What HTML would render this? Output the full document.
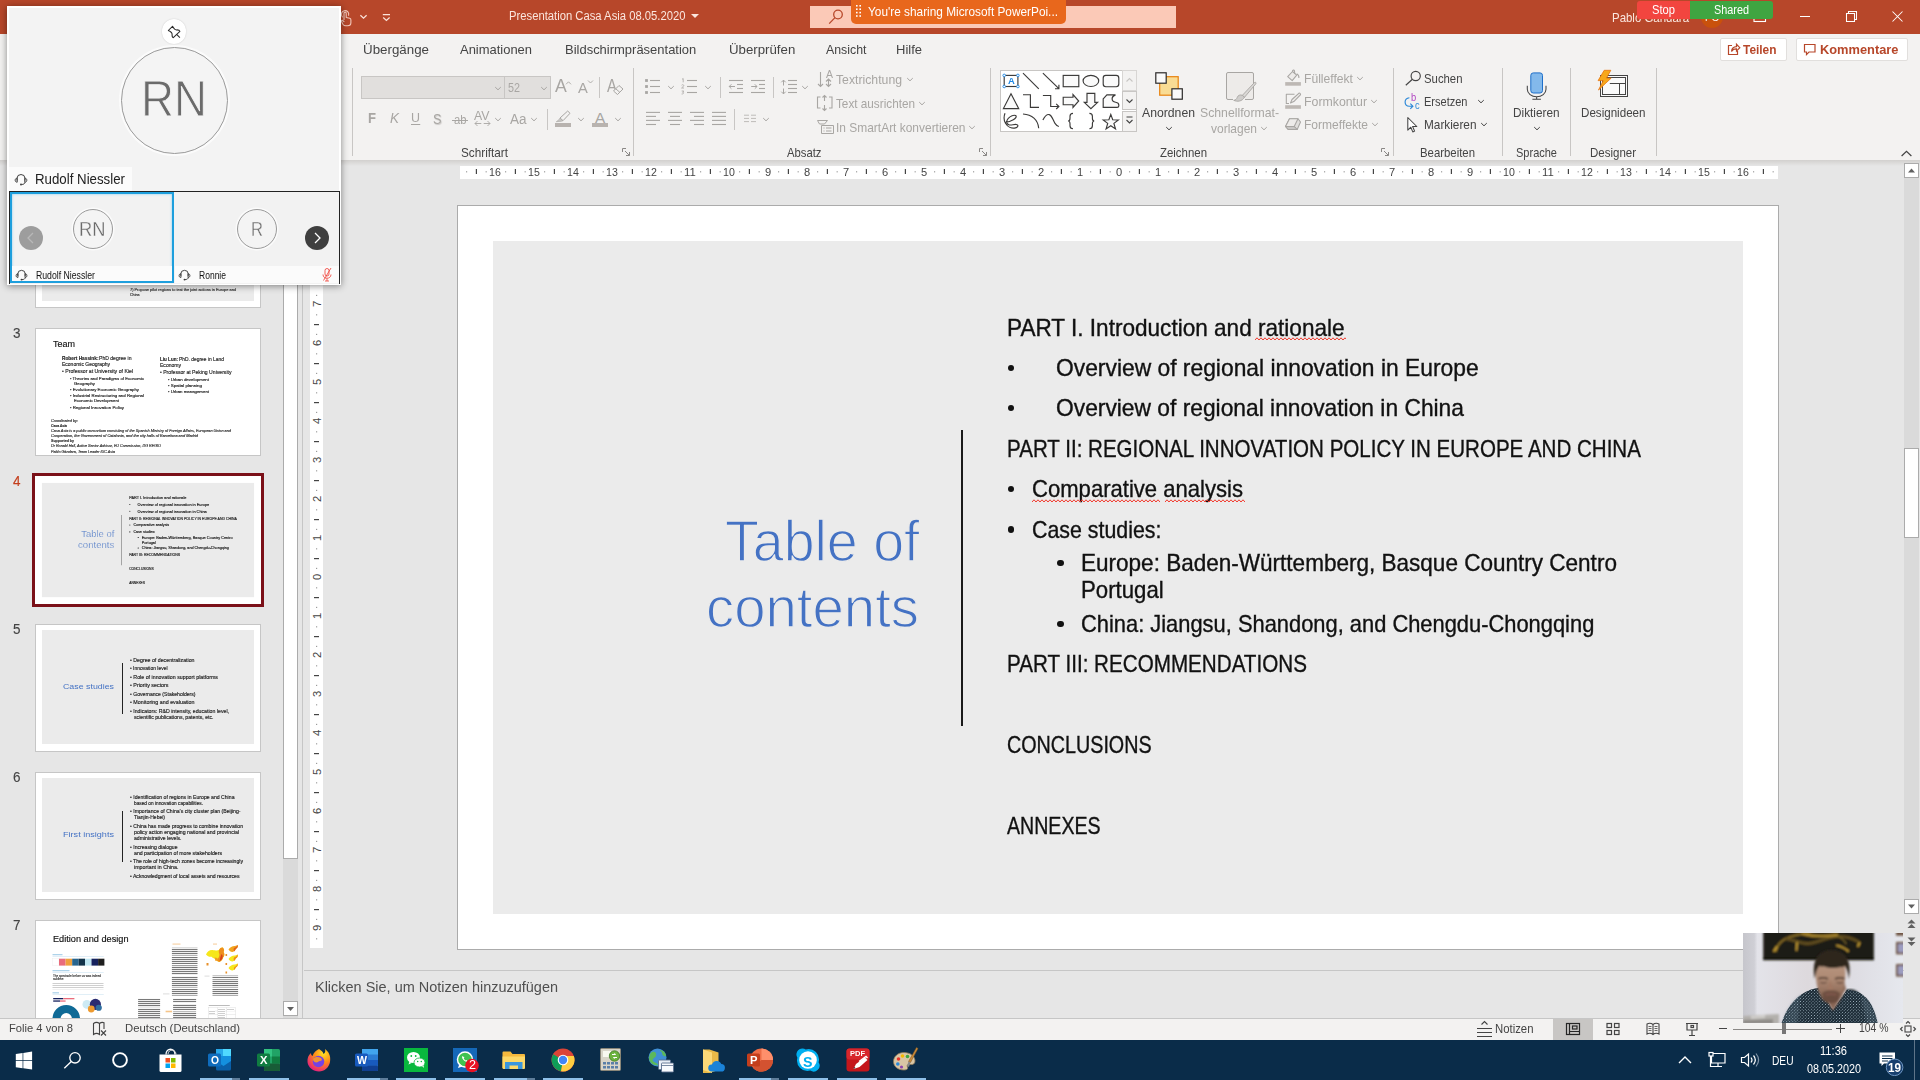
<!DOCTYPE html>
<html lang="de"><head><meta charset="utf-8"><title>Presentation Casa Asia 08.05.2020 - PowerPoint</title>
<style>
html,body{margin:0;padding:0;background:#E6E6E6;width:1920px;height:1080px;overflow:hidden;}
#r{position:relative;width:1920px;height:1080px;overflow:hidden;background:#E6E6E6;font-family:"Liberation Sans",sans-serif;}
#r div,#r span,#r svg{position:absolute;}
#r span.t{white-space:nowrap;line-height:1;transform-origin:0 0;}
#r .rel span, #r .rel div{position:static}
</style></head>
<body><div id="r">
<div style="left:0px;top:0px;width:1920px;height:34px;background:#B7472A;"></div>
<div style="left:0px;top:34px;width:1920px;height:126px;background:#F3F2F1;"></div>
<div style="left:0px;top:160px;width:1920px;height:6px;background:linear-gradient(#D2D0CE,#E6E6E6);"></div>
<svg style="left:336px;top:2px;" width="70" height="30" viewBox="0 0 70 30"><g fill="none" stroke="#F3C9BC" stroke-width="1.100" stroke-linecap="round" stroke-linejoin="round">
<path d="M6.300 14.800A3.700 3.700 0 1 1 12.600 13.300"/>
<path d="M8 17.500V11.200a1.100 1.100 0 0 1 2.200 0V15.500l3.500.800c.800.200 1.200.800 1.200 1.600V20.500c0 2-1.500 3.300-3.300 3.300h-1.800c-1.200 0-2.200-.600-2.900-1.600L5.500 19.500c-.500-.800.500-1.600 1.200-1L8 19.700"/>
</g><g fill="none" stroke="#FBE3DA" stroke-width="1.250">
<path d="M24.400 13.200l3.100 2.900 3.100-2.900"/>
<path d="M46.800 12.500h7.200M47.200 15.500l3.200 3 3.200-3"/>
</g></svg>
<span class="t" style="left:509.00px;top:9.59px;font-size:12.3px;color:#FBE6DE;transform:scaleX(0.9155);">Presentation Casa Asia 08.05.2020</span>
<svg style="left:690px;top:13px;" width="10" height="6" viewBox="0 0 10 6"><path d="M1 1h8L5 5z" fill="#FBE6DE"/></svg>
<div style="left:810px;top:6px;width:366px;height:22px;background:#FBC9B7;"></div>
<svg style="left:827px;top:8px;" width="18" height="18" viewBox="0 0 18 18"><g fill="none" stroke="#B7472A" stroke-width="1.3"><circle cx="11" cy="6.5" r="4.3"/><path d="M8 9.6L2.2 15.6"/></g></svg>
<div style="left:851px;top:0px;width:215px;height:24px;background:#E8671C;border-radius:0 0 5px 5px;"></div>
<svg style="left:855px;top:4px;" width="8" height="16" viewBox="0 0 8 16"><g fill="#fff"><rect x="1" y="1" width="1.6" height="1.6"/><rect x="4.4" y="1" width="1.6" height="1.6"/><rect x="1" y="4.4" width="1.6" height="1.6"/><rect x="4.4" y="4.4" width="1.6" height="1.6"/><rect x="1" y="7.8" width="1.6" height="1.6"/><rect x="4.4" y="7.8" width="1.6" height="1.6"/><rect x="1" y="11.2" width="1.6" height="1.6"/><rect x="4.4" y="11.2" width="1.6" height="1.6"/></g></svg>
<span class="t" style="left:868.00px;top:5.83px;font-size:12.6px;color:#fff;transform:scaleX(0.9399);">You're sharing Microsoft PowerPoi...</span>
<span class="t" style="left:1612.30px;top:11.00px;font-size:13px;color:#FBE6DE;transform:scaleX(0.8805);">Pablo Gandara</span>
<div style="left:1700.5px;top:6px;width:22px;height:22px;background:#C9510C;border-radius:50%;"></div>
<span class="t" style="left:1704.50px;top:12.19px;font-size:11px;color:#fff;transform:scaleX(0.8802);">PG</span>
<svg style="left:1753px;top:10px;" width="14" height="13" viewBox="0 0 14 13"><g fill="none" stroke="#fff" stroke-width="1.1"><rect x="1" y="1.5" width="11.5" height="10"/><path d="M1 4.5h11.5"/></g></svg>
<div style="left:1637px;top:1px;width:54px;height:18px;background:#F2453F;border-radius:3px 0 0 3px;"></div>
<div style="left:1690px;top:1px;width:83px;height:18px;background:#3FA541;border-radius:0 3px 3px 0;"></div>
<span class="t" style="left:1652.00px;top:4.09px;font-size:12.3px;color:#fff;transform:scaleX(0.9092);">Stop</span>
<span class="t" style="left:1714.00px;top:4.09px;font-size:12.3px;color:#fff;transform:scaleX(0.8826);">Shared</span>
<svg style="left:1795px;top:6px;" width="120" height="22" viewBox="0 0 120 22"><g fill="none" stroke="#fff" stroke-width="1.05">
<path d="M5 10.5h10"/>
<path d="M51.5 7.5h8v8h-8zM53.5 7.5v-2h8v8h-2"/>
<path d="M97.5 5.5l10 10M107.5 5.5l-10 10"/></g></svg>
<span class="t" style="left:363.00px;top:43.68px;font-size:12.9px;color:#444;transform:scaleX(1.0345);">Übergänge</span>
<span class="t" style="left:460.00px;top:43.68px;font-size:12.9px;color:#444;transform:scaleX(1.0046);">Animationen</span>
<span class="t" style="left:565.30px;top:43.68px;font-size:12.9px;color:#444;transform:scaleX(1.0069);">Bildschirmpräsentation</span>
<span class="t" style="left:729.40px;top:43.68px;font-size:12.9px;color:#444;transform:scaleX(1.0279);">Überprüfen</span>
<span class="t" style="left:826.30px;top:43.68px;font-size:12.9px;color:#444;transform:scaleX(0.9579);">Ansicht</span>
<span class="t" style="left:896.00px;top:43.68px;font-size:12.9px;color:#444;transform:scaleX(1.0079);">Hilfe</span>
<div style="left:1720px;top:37.5px;width:66.5px;height:23px;background:#fff;border:1px solid #E1DFDD;border-radius:2px;box-sizing:border-box;"></div>
<div style="left:1795.5px;top:37.5px;width:112px;height:23px;background:#fff;border:1px solid #E1DFDD;border-radius:2px;box-sizing:border-box;"></div>
<svg style="left:1726px;top:41px;" width="16" height="16" viewBox="0 0 16 16"><g fill="none" stroke="#B7472A" stroke-width="1.2"><path d="M6 4.5H2.5v9h9V10"/><path d="M5.5 10.5c.3-3 2-4.7 5-4.8V3.3l3.3 3.4-3.3 3.4V7.8c-2.2-.1-3.8.7-5 2.700z"/></g></svg>
<span class="t" style="left:1743.00px;top:42.66px;font-size:13.4px;color:#B7472A;font-weight:700;transform:scaleX(0.8885);">Teilen</span>
<svg style="left:1802px;top:42px;" width="16" height="15" viewBox="0 0 16 15"><path d="M2.5 2.5h10.500v7.500H7l-2.500 2.600V10h-2z" fill="none" stroke="#B7472A" stroke-width="1.2"/></svg>
<span class="t" style="left:1819.50px;top:42.66px;font-size:13.4px;color:#B7472A;font-weight:700;transform:scaleX(0.9590);">Kommentare</span>
<div style="left:352px;top:68px;width:1px;height:88px;background:#C8C6C4;"></div>
<div style="left:633px;top:68px;width:1px;height:88px;background:#C8C6C4;"></div>
<div style="left:990px;top:68px;width:1px;height:88px;background:#C8C6C4;"></div>
<div style="left:1393px;top:68px;width:1px;height:88px;background:#C8C6C4;"></div>
<div style="left:1502px;top:68px;width:1px;height:88px;background:#C8C6C4;"></div>
<div style="left:1570px;top:68px;width:1px;height:88px;background:#C8C6C4;"></div>
<div style="left:1656px;top:68px;width:1px;height:88px;background:#C8C6C4;"></div>
<span class="t" style="left:461.00px;top:146.67px;font-size:12.2px;color:#444;transform:scaleX(0.9638);">Schriftart</span>
<span class="t" style="left:786.75px;top:146.67px;font-size:12.2px;color:#444;transform:scaleX(0.9258);">Absatz</span>
<span class="t" style="left:1159.50px;top:146.67px;font-size:12.2px;color:#444;transform:scaleX(0.9374);">Zeichnen</span>
<span class="t" style="left:1419.90px;top:146.67px;font-size:12.2px;color:#444;transform:scaleX(0.9329);">Bearbeiten</span>
<span class="t" style="left:1515.80px;top:146.67px;font-size:12.2px;color:#444;transform:scaleX(0.9030);">Sprache</span>
<span class="t" style="left:1590.00px;top:146.67px;font-size:12.2px;color:#444;transform:scaleX(0.9430);">Designer</span>
<svg style="left:622px;top:148px;" width="9" height="9" viewBox="0 0 9 9"><g fill="none" stroke="#8A8886" stroke-width="1"><path d="M0.500 4V0.500H4"/><path d="M3 3l4.500 4.500M7.500 4v3.500H4"/></g></svg>
<svg style="left:979px;top:148px;" width="9" height="9" viewBox="0 0 9 9"><g fill="none" stroke="#8A8886" stroke-width="1"><path d="M0.500 4V0.500H4"/><path d="M3 3l4.500 4.500M7.500 4v3.500H4"/></g></svg>
<svg style="left:1381px;top:148px;" width="9" height="9" viewBox="0 0 9 9"><g fill="none" stroke="#8A8886" stroke-width="1"><path d="M0.500 4V0.500H4"/><path d="M3 3l4.500 4.500M7.500 4v3.500H4"/></g></svg>
<svg style="left:1899px;top:148px;" width="14" height="10" viewBox="0 0 14 10"><path d="M2.600 8l4.900-4.600 4.900 4.600" fill="none" stroke="#444" stroke-width="1.250"/></svg>
<div style="left:361px;top:76px;width:144px;height:23px;background:#E1DFDD;border:1px solid #C8C6C4;box-sizing:border-box;"></div>
<div style="left:504px;top:76px;width:47px;height:23px;background:#E1DFDD;border:1px solid #C8C6C4;box-sizing:border-box;"></div>
<svg style="left:494px;top:86px;" width="8" height="6" viewBox="0 0 8 6"><path d="M1.200 1.100l2.800 2.700 2.800-2.700" fill="none" stroke="#A8A6A3" stroke-width="1"/></svg>
<svg style="left:540px;top:86px;" width="8" height="6" viewBox="0 0 8 6"><path d="M1.200 1.100l2.800 2.700 2.800-2.700" fill="none" stroke="#A8A6A3" stroke-width="1"/></svg>
<span class="t" style="left:508.30px;top:81.87px;font-size:12.2px;color:#A8A6A3;transform:scaleX(0.8848);">52</span>
<span class="t" style="left:554.60px;top:77.00px;font-size:18.9px;color:#A8A6A3;transform:scaleX(0.9358);">A</span>
<svg style="left:564.5px;top:79.5px;" width="8" height="6" viewBox="0 0 8 6"><path d="M1 4.300l2.500-2.500 2.500 2.500" fill="none" stroke="#A8A6A3" stroke-width=".900"/></svg>
<span class="t" style="left:578.30px;top:80.64px;font-size:14.6px;color:#A8A6A3;transform:scaleX(1.0067);">A</span>
<svg style="left:586.5px;top:79.3px;" width="8" height="6" viewBox="0 0 8 6"><path d="M1 1.500l2.500 2.500 2.500-2.500" fill="none" stroke="#A8A6A3" stroke-width=".900"/></svg>
<div style="left:599px;top:77px;width:1px;height:21px;background:#C8C6C4;"></div>
<span class="t" style="left:606.60px;top:77.00px;font-size:18.9px;color:#A8A6A3;transform:scaleX(0.7772);">A</span>
<svg style="left:612px;top:84px;" width="12" height="12" viewBox="0 0 12 12"><path d="M1.500 7l5.500-5.500 4 3.500-5.500 5.500zM3.800 4.800l4 3.500" fill="#F3F2F1" stroke="#A8A6A3" stroke-width="1"/></svg>
<span class="t" style="left:368.00px;top:111.23px;font-size:14.5px;color:#A8A6A3;font-weight:700;transform:scaleX(0.9030);">F</span>
<span class="t" style="left:389.50px;top:111.23px;font-size:14.5px;color:#A8A6A3;font-style:italic;transform:scaleX(0.9305);">K</span>
<span class="t" style="left:411.00px;top:112.07px;font-size:13.5px;color:#A8A6A3;transform:scaleX(0.9231);border-bottom:1px solid #A8A6A3;padding-bottom:0;line-height:.92;">U</span>
<span class="t" style="left:433.00px;top:111.30px;font-size:15px;color:#A8A6A3;transform:scaleX(0.8487);text-shadow:1px 1px 1px #c8c6c4;">S</span>
<span class="t" style="left:454.00px;top:113.62px;font-size:12.5px;color:#A8A6A3;transform:scaleX(0.8989);">ab</span>
<div style="left:452px;top:120px;width:16px;height:1px;background:#A8A6A3;"></div>
<span class="t" style="left:474.00px;top:109.64px;font-size:12px;color:#A8A6A3;transform:scaleX(1.0248);">AV</span>
<svg style="left:474px;top:120.3px;" width="17" height="7" viewBox="0 0 17 7"><path d="M1 3.500h6.300M9.700 3.500h6.300M3.500 1L1 3.500 3.500 6M13.500 1L16 3.500 13.500 6" fill="none" stroke="#A8A6A3" stroke-width="0.9"/></svg>
<svg style="left:493.5px;top:117px;" width="8" height="6" viewBox="0 0 8 6"><path d="M1.200 1.100l2.800 2.700 2.800-2.700" fill="none" stroke="#A8A6A3" stroke-width="1"/></svg>
<span class="t" style="left:510.00px;top:111.65px;font-size:14px;color:#A8A6A3;transform:scaleX(0.9635);">Aa</span>
<svg style="left:529.5px;top:117px;" width="8" height="6" viewBox="0 0 8 6"><path d="M1.200 1.100l2.800 2.700 2.800-2.700" fill="none" stroke="#A8A6A3" stroke-width="1"/></svg>
<div style="left:547px;top:109px;width:1px;height:21px;background:#C8C6C4;"></div>
<svg style="left:554px;top:110px;" width="18" height="18" viewBox="0 0 18 18"><path d="M6 8l7.700-7 2.300 2.300-7 7.400z" fill="#F3F2F1" stroke="#A8A6A3" stroke-width="1" stroke-linejoin="round"/><path d="M6 8l-1 1.700-2.700 2 5-.400 1.700-.600z" fill="#C8C6C4" stroke="#A8A6A3" stroke-width=".600" stroke-linejoin="round"/></svg>
<div style="left:555px;top:123px;width:16px;height:4px;background:#B8B3AF;"></div>
<svg style="left:576.5px;top:117px;" width="8" height="6" viewBox="0 0 8 6"><path d="M1.200 1.100l2.800 2.700 2.800-2.700" fill="none" stroke="#A8A6A3" stroke-width="1"/></svg>
<span class="t" style="left:595.00px;top:109.65px;font-size:15.3px;color:#A8A6A3;">A</span>
<div style="left:592px;top:123px;width:16px;height:4px;background:#B8B3AF;"></div>
<svg style="left:613.5px;top:117px;" width="8" height="6" viewBox="0 0 8 6"><path d="M1.200 1.100l2.800 2.700 2.800-2.700" fill="none" stroke="#A8A6A3" stroke-width="1"/></svg>
<svg style="left:636px;top:66px;" width="180" height="70" viewBox="0 0 180 70"><rect x="9.1" y="13.10" width="2.800" height="2.800" fill="#A8A6A3"/><rect x="14.0" y="13.95" width="10.0" height="1.1" fill="#A8A6A3"/><rect x="9.1" y="19.10" width="2.800" height="2.800" fill="#A8A6A3"/><rect x="14.0" y="19.95" width="10.0" height="1.1" fill="#A8A6A3"/><rect x="9.1" y="25.10" width="2.800" height="2.800" fill="#A8A6A3"/><rect x="14.0" y="25.95" width="10.0" height="1.1" fill="#A8A6A3"/><rect x="51.0" y="13.95" width="10.0" height="1.1" fill="#A8A6A3"/><rect x="51.0" y="19.95" width="10.0" height="1.1" fill="#A8A6A3"/><rect x="51.0" y="25.95" width="10.0" height="1.1" fill="#A8A6A3"/><g fill="none" stroke="#A8A6A3" stroke-width=".800"><path d="M46 13.300l1.200-.800v3.800M45.600 19.200c.900-.900 2.200-.500 2.200.400 0 .800-1.300 1.400-2.200 2.400h2.400M45.700 25h2.100l-1.100 1.300c1.400 0 1.400 1.800-1.100 1.700"/></g><rect x="93.0" y="13.95" width="14.0" height="1.1" fill="#A8A6A3"/><rect x="101.0" y="17.95" width="6.0" height="1.1" fill="#A8A6A3"/><rect x="101.0" y="21.95" width="6.0" height="1.1" fill="#A8A6A3"/><rect x="93.0" y="25.95" width="14.0" height="1.1" fill="#A8A6A3"/><rect x="115.0" y="13.95" width="14.0" height="1.1" fill="#A8A6A3"/><rect x="123.0" y="17.95" width="6.0" height="1.1" fill="#A8A6A3"/><rect x="123.0" y="21.95" width="6.0" height="1.1" fill="#A8A6A3"/><rect x="115.0" y="25.95" width="14.0" height="1.1" fill="#A8A6A3"/><g fill="none" stroke="#A8A6A3" stroke-width="1"><path d="M99 20.500h-5.800M95.400 18.300l-2.200 2.200 2.200 2.200"/><path d="M115.200 20.500h5.800M118.800 18.300l2.200 2.200-2.200 2.200"/><path d="M147.500 14.200v5.300M145.300 16.300l2.200-2.200 2.200 2.200M147.500 22.500v5.300M145.300 25.700l2.200 2.200 2.200-2.200"/></g><rect x="152.0" y="13.95" width="9.0" height="1.1" fill="#A8A6A3"/><rect x="152.0" y="17.95" width="9.0" height="1.1" fill="#A8A6A3"/><rect x="152.0" y="21.95" width="9.0" height="1.1" fill="#A8A6A3"/><rect x="152.0" y="25.95" width="9.0" height="1.1" fill="#A8A6A3"/><rect x="10.0" y="45.85" width="14.0" height="1.1" fill="#A8A6A3"/><rect x="32.0" y="45.85" width="14.0" height="1.1" fill="#A8A6A3"/><rect x="54.0" y="45.85" width="14.0" height="1.1" fill="#A8A6A3"/><rect x="76.0" y="45.85" width="14.0" height="1.1" fill="#A8A6A3"/><rect x="10.0" y="49.85" width="10.0" height="1.1" fill="#A8A6A3"/><rect x="34.0" y="49.85" width="10.0" height="1.1" fill="#A8A6A3"/><rect x="58.0" y="49.85" width="10.0" height="1.1" fill="#A8A6A3"/><rect x="76.0" y="49.85" width="14.0" height="1.1" fill="#A8A6A3"/><rect x="10.0" y="53.85" width="14.0" height="1.1" fill="#A8A6A3"/><rect x="32.0" y="53.85" width="14.0" height="1.1" fill="#A8A6A3"/><rect x="54.0" y="53.85" width="14.0" height="1.1" fill="#A8A6A3"/><rect x="76.0" y="53.85" width="14.0" height="1.1" fill="#A8A6A3"/><rect x="10.0" y="57.95" width="10.0" height="1.1" fill="#A8A6A3"/><rect x="34.0" y="57.95" width="10.0" height="1.1" fill="#A8A6A3"/><rect x="58.0" y="57.95" width="10.0" height="1.1" fill="#A8A6A3"/><rect x="76.0" y="57.95" width="14.0" height="1.1" fill="#A8A6A3"/><rect x="108.0" y="48.70" width="5.0" height="1" fill="#BEBCB9"/><rect x="115.0" y="48.70" width="5.0" height="1" fill="#BEBCB9"/><rect x="108.0" y="51.90" width="5.0" height="1" fill="#BEBCB9"/><rect x="115.0" y="51.90" width="5.0" height="1" fill="#BEBCB9"/><rect x="108.0" y="55.10" width="5.0" height="1" fill="#BEBCB9"/><rect x="115.0" y="55.10" width="5.0" height="1" fill="#BEBCB9"/></svg>
<svg style="left:666.5px;top:85px;" width="8" height="6" viewBox="0 0 8 6"><path d="M1.200 1.100l2.800 2.700 2.800-2.700" fill="none" stroke="#A8A6A3" stroke-width="1"/></svg>
<svg style="left:703.5px;top:85px;" width="8" height="6" viewBox="0 0 8 6"><path d="M1.200 1.100l2.800 2.700 2.800-2.700" fill="none" stroke="#A8A6A3" stroke-width="1"/></svg>
<svg style="left:800.5px;top:85px;" width="8" height="6" viewBox="0 0 8 6"><path d="M1.200 1.100l2.800 2.700 2.800-2.700" fill="none" stroke="#A8A6A3" stroke-width="1"/></svg>
<svg style="left:761.5px;top:117px;" width="8" height="6" viewBox="0 0 8 6"><path d="M1.200 1.100l2.800 2.700 2.800-2.700" fill="none" stroke="#A8A6A3" stroke-width="1"/></svg>
<div style="left:720px;top:77px;width:1px;height:21px;background:#C8C6C4;"></div>
<div style="left:773px;top:77px;width:1px;height:21px;background:#C8C6C4;"></div>
<div style="left:734px;top:109px;width:1px;height:21px;background:#C8C6C4;"></div>
<svg style="left:816px;top:70px;" width="18" height="19" viewBox="0 0 18 19"><g fill="none" stroke="#A8A6A3" stroke-width="1.1"><path d="M4.500 2v14.500M2 14l2.500 2.500L7 14M12.500 16.500V9M10 11.500L12.500 9l2.500 2.500M10 14l2.500 2.500 2.500-2.500"/></g></svg>
<span class="t" style="left:825.50px;top:70.03px;font-size:10px;color:#A8A6A3;transform:scaleX(1.0492);">A</span>
<span class="t" style="left:836.00px;top:72.70px;font-size:13px;color:#A8A6A3;transform:scaleX(0.9416);">Textrichtung</span>
<svg style="left:905.5px;top:77px;" width="8" height="6" viewBox="0 0 8 6"><path d="M1.200 1.100l2.800 2.700 2.800-2.700" fill="none" stroke="#A8A6A3" stroke-width="1"/></svg>
<svg style="left:816px;top:94px;" width="18" height="18" viewBox="0 0 18 18"><g fill="none" stroke="#A8A6A3" stroke-width="1.100"><path d="M4.500 3H1.500v11h3M13 3h3v11h-3M8.500 1.500v5.500M6.500 3.500l2-2 2 2M8.500 16.500v-5.500M6.500 14.500l2 2 2-2"/></g></svg>
<span class="t" style="left:836.00px;top:97.00px;font-size:13px;color:#A8A6A3;transform:scaleX(0.9035);">Text ausrichten</span>
<svg style="left:917.5px;top:101px;" width="8" height="6" viewBox="0 0 8 6"><path d="M1.200 1.100l2.800 2.700 2.800-2.700" fill="none" stroke="#A8A6A3" stroke-width="1"/></svg>
<svg style="left:816px;top:119px;" width="19" height="16" viewBox="0 0 19 16"><g fill="none" stroke="#A8A6A3" stroke-width="1"><path d="M1.500 1.500h10l-3 3.500h-5zM5.500 6.500h12v8h-12z"/><path d="M7.500 9h1M10 9h5.500M7.500 12h1M10 12h5.500"/></g></svg>
<span class="t" style="left:836.00px;top:121.00px;font-size:13px;color:#A8A6A3;transform:scaleX(0.9192);">In SmartArt konvertieren</span>
<svg style="left:967.5px;top:125px;" width="8" height="6" viewBox="0 0 8 6"><path d="M1.200 1.100l2.800 2.700 2.800-2.700" fill="none" stroke="#A8A6A3" stroke-width="1"/></svg>
<div style="left:1000px;top:70px;width:137px;height:62px;background:#fff;border:1px solid #C8C6C4;box-sizing:border-box;"></div>
<div style="left:1122px;top:70px;width:15px;height:21px;background:#F3F2F1;border:1px solid #D8D6D4;box-sizing:border-box;"></div>
<div style="left:1122px;top:91px;width:15px;height:19px;background:#F3F2F1;border:1px solid #C8C6C4;box-sizing:border-box;"></div>
<div style="left:1122px;top:111px;width:15px;height:21px;background:#F3F2F1;border:1px solid #C8C6C4;box-sizing:border-box;"></div>
<svg style="left:1125px;top:77px;" width="9" height="6" viewBox="0 0 9 6"><path d="M1.500 4.500l3-3 3 3" fill="none" stroke="#C8C6C4" stroke-width="1.1"/></svg>
<svg style="left:1125px;top:98px;" width="9" height="6" viewBox="0 0 9 6"><path d="M1.500 1.500l3 3 3-3" fill="none" stroke="#444" stroke-width="1.1"/></svg>
<svg style="left:1125px;top:116px;" width="9" height="10" viewBox="0 0 9 10"><path d="M1.500 1h6M1.500 4l3 3 3-3" fill="none" stroke="#444" stroke-width="1.100"/></svg>
<svg style="left:1000px;top:70px;" width="122" height="62" viewBox="0 0 122 62"><g fill="none" stroke="#3b3a39" stroke-width="1.150" stroke-linejoin="miter">
<rect x="4.200" y="5.400" width="13.700" height="11.100"/>
<g fill="#fff" stroke="#1E88E5" stroke-width="0.900"><circle cx="4.200" cy="5.400" r="1.300"/><circle cx="17.900" cy="5.400" r="1.300"/><circle cx="4.200" cy="16.500" r="1.300"/><circle cx="17.900" cy="16.500" r="1.300"/></g>
<path d="M23 3.200L38.800 18.800"/>
<path d="M42.900 3.200L58.900 18.700M55 18.700h3.900v-3.900"/>
<rect x="63.200" y="5.400" width="15.600" height="11.300" fill="#FAFAFA"/>
<ellipse cx="90.900" cy="10.900" rx="7.800" ry="5.600" fill="#FAFAFA"/>
<rect x="103.200" y="5.400" width="15.600" height="11.300" rx="2.600" fill="#FAFAFA"/>
<path d="M11 23.700L18.700 38.600H3.400Z" fill="#FAFAFA"/>
<path d="M23 24.750h7.400v12.650H39"/>
<path d="M42.900 25.500h7.800v11h8.200M56.200 33.900l2.700 2.600-2.700 2.500"/>
<path d="M63.200 27.250H73V24.500l5.700 6.500-5.700 6.500v-2.800h-9.800z" fill="#FAFAFA"/>
<path d="M87 23.300h7.800v9h2.800l-6.700 6.300-6.600-6.300H87z" fill="#FAFAFA"/>
<path d="M103.200 28.800l3.700-3.900h8.600c-2.200.800-3.400 2.200-3.400 3.900 0 2 1.500 3.200 3.500 3.500 2 .300 3.200 1 3.200 2.700v1c0 .900-.700 1.400-1.700 1.400H103.200z" fill="#FAFAFA"/>
<path d="M5 43.300c-1.200 3-1.400 6.500.500 10 2 3.600 6.200 5.400 10 4.600 2.800-.600 3.200-3 .800-3.400-2.500-.400-5.200 1.200-7.500.300-2.600-1-2.800-4-.500-6.500 2-2.200 5.500-3.800 7.300-2.700 1.600 1-.300 3-2.300 4.200-2.500 1.500-5.500 2.500-7.800 2.400"/>
<path d="M23 44c9 .600 15 5.800 15.700 14.300"/>
<path d="M42.900 50c1.800-3.600 4.200-5.800 6.300-5.400 2.800.600 3.800 5.800 5.800 8.800 1.300 2 2.600 3 3.900 3.100"/>
<path d="M73 43.300c-2.600 0-3 .900-3 3v1.900c0 1.900-.600 2.700-1.800 2.800 1.200.100 1.800.900 1.800 2.800v1.900c0 2.100.400 3 3 3"/>
<path d="M89.400 43.300c2.600 0 3 .900 3 3v1.900c0 1.900.600 2.700 1.800 2.800-1.200.100-1.800.900-1.800 2.800v1.900c0 2.100-.400 3-3 3"/>
<path d="M110.8 44.4L112.7 49.7L118.4 49.9L113.9 53.4L115.5 58.9L110.8 55.7L106.1 58.9L107.7 53.4L103.2 49.9L108.9 49.7Z" fill="#FAFAFA"/>
</g></svg>
<span class="t" style="left:1007.60px;top:76.26px;font-size:9.5px;color:#1E88E5;font-weight:700;transform:scaleX(0.9891);">A</span>
<svg style="left:1153px;top:70px;" width="34" height="34" viewBox="0 0 34 34"><rect x="6.700" y="6.700" width="18.500" height="18.500" fill="#F9DC94" stroke="#E8820E" stroke-width="1.200"/>
<rect x="2.800" y="2.800" width="10.400" height="10.400" fill="#FAFAFA" stroke="#2b2a29" stroke-width="1.200"/><rect x="18.900" y="18.800" width="10.400" height="10.400" fill="#FAFAFA" stroke="#2b2a29" stroke-width="1.200"/></svg>
<span class="t" style="left:1141.80px;top:105.70px;font-size:13px;color:#444;transform:scaleX(0.9399);">Anordnen</span>
<svg style="left:1164.5px;top:125.5px;" width="8" height="6" viewBox="0 0 8 6"><path d="M1.200 1.100l2.800 2.700 2.800-2.700" fill="none" stroke="#444" stroke-width="1"/></svg>
<svg style="left:1224px;top:70px;" width="36" height="34" viewBox="0 0 36 34"><rect x="2.500" y="2.500" width="27" height="27" rx="1.500" fill="#EDEBE9" stroke="#A8A6A3" stroke-width="1"/>
<rect x="9" y="27.500" width="12" height="4" fill="#F3F2F1"/>
<path d="M30.400 12.600c1-.900 2.100.100 1.400 1.200L20.500 27.300l-2.300-1.800z" fill="#DAD8D6" stroke="#A8A6A3" stroke-width=".900" stroke-linejoin="round"/>
<path d="M18.300 25.300c-2.400-1-4.400.200-5 2-.700 2-2 2.800-3.600 3 3.400 1.600 8.400 1.400 10.800-3.200z" fill="#CFCDCB" stroke="#A8A6A3" stroke-width=".900" stroke-linejoin="round"/></svg>
<span class="t" style="left:1199.50px;top:105.70px;font-size:13px;color:#A8A6A3;transform:scaleX(0.9426);">Schnellformat-</span>
<span class="t" style="left:1211.00px;top:121.50px;font-size:13px;color:#A8A6A3;transform:scaleX(0.9223);">vorlagen</span>
<svg style="left:1259.5px;top:126px;" width="8" height="6" viewBox="0 0 8 6"><path d="M1.200 1.100l2.800 2.700 2.800-2.700" fill="none" stroke="#A8A6A3" stroke-width="1"/></svg>
<svg style="left:1280px;top:64px;" width="24" height="24" viewBox="0 0 24 24"><g fill="none" stroke="#A8A6A3" stroke-width="1.050" stroke-linejoin="round"><path d="M7.700 12.700l4.800-5.200 4.200 3.600-4.500 5.600z" fill="#EDEBE9"/><path d="M12.500 7.500c-.300-1.500 1.800-2 2-.500l.300 3"/><path d="M16.700 9.800c1.800 1 2.400 2.500 2.200 4.200"/></g><rect x="5.200" y="18.100" width="15.700" height="3.600" fill="#BDB8B4"/></svg>
<span class="t" style="left:1304.00px;top:72.00px;font-size:13px;color:#A8A6A3;transform:scaleX(0.9331);">Fülleffekt</span>
<svg style="left:1355.5px;top:76px;" width="8" height="6" viewBox="0 0 8 6"><path d="M1.200 1.100l2.800 2.700 2.800-2.700" fill="none" stroke="#A8A6A3" stroke-width="1"/></svg>
<svg style="left:1280px;top:87px;" width="24" height="24" viewBox="0 0 24 24"><g fill="none" stroke="#A8A6A3" stroke-width="1.050" stroke-linejoin="round"><path d="M14.500 7.300H6.300v9.200H9"/><path d="M10.500 16l1.500-3.500 6.800-6.200c1-.600 2.200.600 1.600 1.600L13.800 14.600z" fill="#EDEBE9"/></g><rect x="5.200" y="18.200" width="15.700" height="3.600" fill="#BDB8B4"/></svg>
<span class="t" style="left:1304.00px;top:95.00px;font-size:13px;color:#A8A6A3;transform:scaleX(0.9478);">Formkontur</span>
<svg style="left:1369.5px;top:99px;" width="8" height="6" viewBox="0 0 8 6"><path d="M1.200 1.100l2.800 2.700 2.800-2.700" fill="none" stroke="#A8A6A3" stroke-width="1"/></svg>
<svg style="left:1280px;top:110px;" width="24" height="24" viewBox="0 0 24 24"><g stroke="#A8A6A3" stroke-width="1.050" stroke-linejoin="round"><path d="M9.500 8.700h8.500l2.500 3.300-3.300 7.500H8.200L5.500 16.500z" fill="#E1DFDD"/><path d="M9.500 8.700h8.500l-3.800 7.800H5.500z" fill="#EDEBE9"/><path d="M14.200 16.500l3 3" fill="none"/><path d="M5.500 16.500l2.700 3h9l-3-3z" fill="#C8C6C4"/></g></svg>
<span class="t" style="left:1304.00px;top:118.00px;font-size:13px;color:#A8A6A3;transform:scaleX(0.9259);">Formeffekte</span>
<svg style="left:1370.5px;top:122px;" width="8" height="6" viewBox="0 0 8 6"><path d="M1.200 1.100l2.800 2.700 2.800-2.700" fill="none" stroke="#A8A6A3" stroke-width="1"/></svg>
<svg style="left:1404px;top:68px;" width="18" height="20" viewBox="0 0 18 20"><g fill="none" stroke="#444" stroke-width="1.150"><circle cx="11.700" cy="8" r="4.600"/><path d="M8.400 11.300L1.800 17.300"/></g></svg>
<span class="t" style="left:1424.00px;top:71.50px;font-size:13px;color:#444;transform:scaleX(0.8731);">Suchen</span>
<svg style="left:1403px;top:90px;" width="20" height="20" viewBox="0 0 20 20"><g fill="none" stroke="#2B88D8" stroke-width="1.150"><path d="M6.400 7.750c-3 .500-4.300 2.300-4.300 4.250 0 2.500 1.800 4.200 4.200 4.200h3.300M7.300 13.600l2.600 2.600-2.600 2.600"/></g></svg>
<span class="t" style="left:1411.20px;top:91.71px;font-size:10.5px;color:#B146C2;transform:scaleX(0.8898);">b</span>
<span class="t" style="left:1415.20px;top:99.61px;font-size:10.5px;color:#2B88D8;transform:scaleX(0.8762);">c</span>
<span class="t" style="left:1424.00px;top:94.80px;font-size:13px;color:#444;transform:scaleX(0.8477);">Ersetzen</span>
<svg style="left:1476.5px;top:98.5px;" width="8" height="6" viewBox="0 0 8 6"><path d="M1.200 1.100l2.800 2.700 2.800-2.700" fill="none" stroke="#444" stroke-width="1"/></svg>
<svg style="left:1405px;top:115px;" width="16" height="20" viewBox="0 0 16 20"><path d="M2.800 2.500v12.600l3-2.900 2 4.700 1.800-.800-2-4.600h4.200z" fill="#fff" stroke="#444" stroke-width="1.050" stroke-linejoin="round"/></svg>
<span class="t" style="left:1424.00px;top:117.50px;font-size:13px;color:#444;transform:scaleX(0.9084);">Markieren</span>
<svg style="left:1480px;top:122px;" width="8" height="6" viewBox="0 0 8 6"><path d="M1.200 1.100l2.800 2.700 2.800-2.700" fill="none" stroke="#444" stroke-width="1"/></svg>
<svg style="left:1524px;top:70px;" width="26" height="32" viewBox="0 0 26 32"><rect x="6.800" y="2.900" width="11.700" height="20.100" rx="2.500" fill="#83B9EB" stroke="#1E6FC9" stroke-width="1"/><path d="M3.300 15.800v3.500a9.350 7.500 0 0 0 18.700 0v-3.500M12.650 26.800v2.400M8.400 29.200h8.500" fill="none" stroke="#444" stroke-width="1.050"/></svg>
<span class="t" style="left:1513.05px;top:105.50px;font-size:13px;color:#444;transform:scaleX(0.9065);">Diktieren</span>
<svg style="left:1532.5px;top:125.5px;" width="8" height="6" viewBox="0 0 8 6"><path d="M1.200 1.100l2.800 2.700 2.800-2.700" fill="none" stroke="#444" stroke-width="1"/></svg>
<svg style="left:1596px;top:68px;" width="34" height="32" viewBox="0 0 34 32"><g fill="none" stroke="#444" stroke-width="1"><rect x="4.500" y="7.500" width="27" height="21" fill="#FAFAFA"/><rect x="6.500" y="9.500" width="23" height="17"/><path d="M23.500 15.500v11M13.800 15.500h15.700"/></g><path d="M8.200 2.300h6.600l-4.300 7.800h4.700L2.500 22l4.800-9.400H2.100z" fill="#F7A81B" stroke="#E8740C" stroke-width=".800" stroke-linejoin="round"/></svg>
<span class="t" style="left:1581.35px;top:105.50px;font-size:13px;color:#444;transform:scaleX(0.8923);">Designideen</span>
<div style="left:283px;top:166px;width:15px;height:852px;background:#DADADA;"></div>
<div style="left:283px;top:200px;width:15px;height:659px;background:#fff;border:1px solid #ABABAB;box-sizing:border-box;"></div>
<div style="left:283px;top:1001px;width:15px;height:15px;background:#fff;border:1px solid #ABABAB;box-sizing:border-box;"></div>
<svg style="left:283px;top:1001px;" width="15" height="15" viewBox="0 0 15 15"><path d="M4 6h7l-3.500 4z" fill="#606060"/></svg>
<div style="left:302px;top:166px;width:1px;height:852px;background:#C6C6C6;"></div>
<div style="left:460px;top:166px;width:1318px;height:13px;background:#fff;"></div>
<svg style="left:460px;top:166px;" width="1318" height="14" viewBox="0 0 1318 14"><rect x="6.15" y="5.200" width="1" height="1.2" fill="#8a8a8a"/><rect x="15.80" y="3" width="1.2" height="5" fill="#444"/><rect x="25.65" y="5.200" width="1" height="1.2" fill="#8a8a8a"/><rect x="45.15" y="5.200" width="1" height="1.2" fill="#8a8a8a"/><rect x="54.80" y="3" width="1.2" height="5" fill="#444"/><rect x="64.65" y="5.200" width="1" height="1.2" fill="#8a8a8a"/><rect x="84.15" y="5.200" width="1" height="1.2" fill="#8a8a8a"/><rect x="93.80" y="3" width="1.2" height="5" fill="#444"/><rect x="103.65" y="5.200" width="1" height="1.2" fill="#8a8a8a"/><rect x="123.15" y="5.200" width="1" height="1.2" fill="#8a8a8a"/><rect x="132.80" y="3" width="1.2" height="5" fill="#444"/><rect x="142.65" y="5.200" width="1" height="1.2" fill="#8a8a8a"/><rect x="162.15" y="5.200" width="1" height="1.2" fill="#8a8a8a"/><rect x="171.80" y="3" width="1.2" height="5" fill="#444"/><rect x="181.65" y="5.200" width="1" height="1.2" fill="#8a8a8a"/><rect x="201.15" y="5.200" width="1" height="1.2" fill="#8a8a8a"/><rect x="210.80" y="3" width="1.2" height="5" fill="#444"/><rect x="220.65" y="5.200" width="1" height="1.2" fill="#8a8a8a"/><rect x="240.15" y="5.200" width="1" height="1.2" fill="#8a8a8a"/><rect x="249.80" y="3" width="1.2" height="5" fill="#444"/><rect x="259.65" y="5.200" width="1" height="1.2" fill="#8a8a8a"/><rect x="279.15" y="5.200" width="1" height="1.2" fill="#8a8a8a"/><rect x="288.80" y="3" width="1.2" height="5" fill="#444"/><rect x="298.65" y="5.200" width="1" height="1.2" fill="#8a8a8a"/><rect x="318.15" y="5.200" width="1" height="1.2" fill="#8a8a8a"/><rect x="327.80" y="3" width="1.2" height="5" fill="#444"/><rect x="337.65" y="5.200" width="1" height="1.2" fill="#8a8a8a"/><rect x="357.15" y="5.200" width="1" height="1.2" fill="#8a8a8a"/><rect x="366.80" y="3" width="1.2" height="5" fill="#444"/><rect x="376.65" y="5.200" width="1" height="1.2" fill="#8a8a8a"/><rect x="396.15" y="5.200" width="1" height="1.2" fill="#8a8a8a"/><rect x="405.80" y="3" width="1.2" height="5" fill="#444"/><rect x="415.65" y="5.200" width="1" height="1.2" fill="#8a8a8a"/><rect x="435.15" y="5.200" width="1" height="1.2" fill="#8a8a8a"/><rect x="444.80" y="3" width="1.2" height="5" fill="#444"/><rect x="454.65" y="5.200" width="1" height="1.2" fill="#8a8a8a"/><rect x="474.15" y="5.200" width="1" height="1.2" fill="#8a8a8a"/><rect x="483.80" y="3" width="1.2" height="5" fill="#444"/><rect x="493.65" y="5.200" width="1" height="1.2" fill="#8a8a8a"/><rect x="513.15" y="5.200" width="1" height="1.2" fill="#8a8a8a"/><rect x="522.80" y="3" width="1.2" height="5" fill="#444"/><rect x="532.65" y="5.200" width="1" height="1.2" fill="#8a8a8a"/><rect x="552.15" y="5.200" width="1" height="1.2" fill="#8a8a8a"/><rect x="561.80" y="3" width="1.2" height="5" fill="#444"/><rect x="571.65" y="5.200" width="1" height="1.2" fill="#8a8a8a"/><rect x="591.15" y="5.200" width="1" height="1.2" fill="#8a8a8a"/><rect x="600.80" y="3" width="1.2" height="5" fill="#444"/><rect x="610.65" y="5.200" width="1" height="1.2" fill="#8a8a8a"/><rect x="630.15" y="5.200" width="1" height="1.2" fill="#8a8a8a"/><rect x="639.80" y="3" width="1.2" height="5" fill="#444"/><rect x="649.65" y="5.200" width="1" height="1.2" fill="#8a8a8a"/><rect x="669.15" y="5.200" width="1" height="1.2" fill="#8a8a8a"/><rect x="678.80" y="3" width="1.2" height="5" fill="#444"/><rect x="688.65" y="5.200" width="1" height="1.2" fill="#8a8a8a"/><rect x="708.15" y="5.200" width="1" height="1.2" fill="#8a8a8a"/><rect x="717.80" y="3" width="1.2" height="5" fill="#444"/><rect x="727.65" y="5.200" width="1" height="1.2" fill="#8a8a8a"/><rect x="747.15" y="5.200" width="1" height="1.2" fill="#8a8a8a"/><rect x="756.80" y="3" width="1.2" height="5" fill="#444"/><rect x="766.65" y="5.200" width="1" height="1.2" fill="#8a8a8a"/><rect x="786.15" y="5.200" width="1" height="1.2" fill="#8a8a8a"/><rect x="795.80" y="3" width="1.2" height="5" fill="#444"/><rect x="805.65" y="5.200" width="1" height="1.2" fill="#8a8a8a"/><rect x="825.15" y="5.200" width="1" height="1.2" fill="#8a8a8a"/><rect x="834.80" y="3" width="1.2" height="5" fill="#444"/><rect x="844.65" y="5.200" width="1" height="1.2" fill="#8a8a8a"/><rect x="864.15" y="5.200" width="1" height="1.2" fill="#8a8a8a"/><rect x="873.80" y="3" width="1.2" height="5" fill="#444"/><rect x="883.65" y="5.200" width="1" height="1.2" fill="#8a8a8a"/><rect x="903.15" y="5.200" width="1" height="1.2" fill="#8a8a8a"/><rect x="912.80" y="3" width="1.2" height="5" fill="#444"/><rect x="922.65" y="5.200" width="1" height="1.2" fill="#8a8a8a"/><rect x="942.15" y="5.200" width="1" height="1.2" fill="#8a8a8a"/><rect x="951.80" y="3" width="1.2" height="5" fill="#444"/><rect x="961.65" y="5.200" width="1" height="1.2" fill="#8a8a8a"/><rect x="981.15" y="5.200" width="1" height="1.2" fill="#8a8a8a"/><rect x="990.80" y="3" width="1.2" height="5" fill="#444"/><rect x="1000.65" y="5.200" width="1" height="1.2" fill="#8a8a8a"/><rect x="1020.15" y="5.200" width="1" height="1.2" fill="#8a8a8a"/><rect x="1029.80" y="3" width="1.2" height="5" fill="#444"/><rect x="1039.65" y="5.200" width="1" height="1.2" fill="#8a8a8a"/><rect x="1059.15" y="5.200" width="1" height="1.2" fill="#8a8a8a"/><rect x="1068.80" y="3" width="1.2" height="5" fill="#444"/><rect x="1078.65" y="5.200" width="1" height="1.2" fill="#8a8a8a"/><rect x="1098.15" y="5.200" width="1" height="1.2" fill="#8a8a8a"/><rect x="1107.80" y="3" width="1.2" height="5" fill="#444"/><rect x="1117.65" y="5.200" width="1" height="1.2" fill="#8a8a8a"/><rect x="1137.15" y="5.200" width="1" height="1.2" fill="#8a8a8a"/><rect x="1146.80" y="3" width="1.2" height="5" fill="#444"/><rect x="1156.65" y="5.200" width="1" height="1.2" fill="#8a8a8a"/><rect x="1176.15" y="5.200" width="1" height="1.2" fill="#8a8a8a"/><rect x="1185.80" y="3" width="1.2" height="5" fill="#444"/><rect x="1195.65" y="5.200" width="1" height="1.2" fill="#8a8a8a"/><rect x="1215.15" y="5.200" width="1" height="1.2" fill="#8a8a8a"/><rect x="1224.80" y="3" width="1.2" height="5" fill="#444"/><rect x="1234.65" y="5.200" width="1" height="1.2" fill="#8a8a8a"/><rect x="1254.15" y="5.200" width="1" height="1.2" fill="#8a8a8a"/><rect x="1263.80" y="3" width="1.2" height="5" fill="#444"/><rect x="1273.65" y="5.200" width="1" height="1.2" fill="#8a8a8a"/><rect x="1293.15" y="5.200" width="1" height="1.2" fill="#8a8a8a"/><rect x="1302.80" y="3" width="1.2" height="5" fill="#444"/><rect x="1312.65" y="5.200" width="1" height="1.2" fill="#8a8a8a"/></svg>
<span class="t" style="left:489.40px;top:166.72px;font-size:11.2px;color:#444;transform:scaleX(0.9476);">16</span>
<span class="t" style="left:528.40px;top:166.72px;font-size:11.2px;color:#444;transform:scaleX(0.9476);">15</span>
<span class="t" style="left:567.40px;top:166.72px;font-size:11.2px;color:#444;transform:scaleX(0.9476);">14</span>
<span class="t" style="left:606.40px;top:166.72px;font-size:11.2px;color:#444;transform:scaleX(0.9476);">13</span>
<span class="t" style="left:645.40px;top:166.72px;font-size:11.2px;color:#444;transform:scaleX(0.9476);">12</span>
<span class="t" style="left:684.40px;top:166.72px;font-size:11.2px;color:#444;transform:scaleX(1.0151);">11</span>
<span class="t" style="left:723.40px;top:166.72px;font-size:11.2px;color:#444;transform:scaleX(0.9476);">10</span>
<span class="t" style="left:765.20px;top:166.72px;font-size:11.2px;color:#444;transform:scaleX(0.9945);">9</span>
<span class="t" style="left:804.20px;top:166.72px;font-size:11.2px;color:#444;transform:scaleX(0.9945);">8</span>
<span class="t" style="left:843.20px;top:166.72px;font-size:11.2px;color:#444;transform:scaleX(0.9945);">7</span>
<span class="t" style="left:882.20px;top:166.72px;font-size:11.2px;color:#444;transform:scaleX(0.9945);">6</span>
<span class="t" style="left:921.20px;top:166.72px;font-size:11.2px;color:#444;transform:scaleX(0.9945);">5</span>
<span class="t" style="left:960.20px;top:166.72px;font-size:11.2px;color:#444;transform:scaleX(0.9945);">4</span>
<span class="t" style="left:999.20px;top:166.72px;font-size:11.2px;color:#444;transform:scaleX(0.9945);">3</span>
<span class="t" style="left:1038.20px;top:166.72px;font-size:11.2px;color:#444;transform:scaleX(0.9945);">2</span>
<span class="t" style="left:1077.20px;top:166.72px;font-size:11.2px;color:#444;transform:scaleX(0.9945);">1</span>
<span class="t" style="left:1116.20px;top:166.72px;font-size:11.2px;color:#444;transform:scaleX(0.9945);">0</span>
<span class="t" style="left:1155.20px;top:166.72px;font-size:11.2px;color:#444;transform:scaleX(0.9945);">1</span>
<span class="t" style="left:1194.20px;top:166.72px;font-size:11.2px;color:#444;transform:scaleX(0.9945);">2</span>
<span class="t" style="left:1233.20px;top:166.72px;font-size:11.2px;color:#444;transform:scaleX(0.9945);">3</span>
<span class="t" style="left:1272.20px;top:166.72px;font-size:11.2px;color:#444;transform:scaleX(0.9945);">4</span>
<span class="t" style="left:1311.20px;top:166.72px;font-size:11.2px;color:#444;transform:scaleX(0.9945);">5</span>
<span class="t" style="left:1350.20px;top:166.72px;font-size:11.2px;color:#444;transform:scaleX(0.9945);">6</span>
<span class="t" style="left:1389.20px;top:166.72px;font-size:11.2px;color:#444;transform:scaleX(0.9945);">7</span>
<span class="t" style="left:1428.20px;top:166.72px;font-size:11.2px;color:#444;transform:scaleX(0.9945);">8</span>
<span class="t" style="left:1467.20px;top:166.72px;font-size:11.2px;color:#444;transform:scaleX(0.9945);">9</span>
<span class="t" style="left:1503.40px;top:166.72px;font-size:11.2px;color:#444;transform:scaleX(0.9476);">10</span>
<span class="t" style="left:1542.40px;top:166.72px;font-size:11.2px;color:#444;transform:scaleX(1.0151);">11</span>
<span class="t" style="left:1581.40px;top:166.72px;font-size:11.2px;color:#444;transform:scaleX(0.9476);">12</span>
<span class="t" style="left:1620.40px;top:166.72px;font-size:11.2px;color:#444;transform:scaleX(0.9476);">13</span>
<span class="t" style="left:1659.40px;top:166.72px;font-size:11.2px;color:#444;transform:scaleX(0.9476);">14</span>
<span class="t" style="left:1698.40px;top:166.72px;font-size:11.2px;color:#444;transform:scaleX(0.9476);">15</span>
<span class="t" style="left:1737.40px;top:166.72px;font-size:11.2px;color:#444;transform:scaleX(0.9476);">16</span>
<div style="left:310px;top:206px;width:13px;height:742px;background:#fff;"></div>
<svg style="left:310px;top:284px;" width="13" height="664" viewBox="0 0 13 664"><rect x="6" y="10.85" width="1.2" height="1" fill="#8a8a8a"/><rect x="6" y="30.35" width="1.2" height="1" fill="#8a8a8a"/><rect x="4" y="40.00" width="5" height="1.2" fill="#444"/><rect x="6" y="49.85" width="1.2" height="1" fill="#8a8a8a"/><rect x="6" y="69.35" width="1.2" height="1" fill="#8a8a8a"/><rect x="4" y="79.00" width="5" height="1.2" fill="#444"/><rect x="6" y="88.85" width="1.2" height="1" fill="#8a8a8a"/><rect x="6" y="108.35" width="1.2" height="1" fill="#8a8a8a"/><rect x="4" y="118.00" width="5" height="1.2" fill="#444"/><rect x="6" y="127.85" width="1.2" height="1" fill="#8a8a8a"/><rect x="6" y="147.35" width="1.2" height="1" fill="#8a8a8a"/><rect x="4" y="157.00" width="5" height="1.2" fill="#444"/><rect x="6" y="166.85" width="1.2" height="1" fill="#8a8a8a"/><rect x="6" y="186.35" width="1.2" height="1" fill="#8a8a8a"/><rect x="4" y="196.00" width="5" height="1.2" fill="#444"/><rect x="6" y="205.85" width="1.2" height="1" fill="#8a8a8a"/><rect x="6" y="225.35" width="1.2" height="1" fill="#8a8a8a"/><rect x="4" y="235.00" width="5" height="1.2" fill="#444"/><rect x="6" y="244.85" width="1.2" height="1" fill="#8a8a8a"/><rect x="6" y="264.35" width="1.2" height="1" fill="#8a8a8a"/><rect x="4" y="274.00" width="5" height="1.2" fill="#444"/><rect x="6" y="283.85" width="1.2" height="1" fill="#8a8a8a"/><rect x="6" y="303.35" width="1.2" height="1" fill="#8a8a8a"/><rect x="4" y="313.00" width="5" height="1.2" fill="#444"/><rect x="6" y="322.85" width="1.2" height="1" fill="#8a8a8a"/><rect x="6" y="342.35" width="1.2" height="1" fill="#8a8a8a"/><rect x="4" y="352.00" width="5" height="1.2" fill="#444"/><rect x="6" y="361.85" width="1.2" height="1" fill="#8a8a8a"/><rect x="6" y="381.35" width="1.2" height="1" fill="#8a8a8a"/><rect x="4" y="391.00" width="5" height="1.2" fill="#444"/><rect x="6" y="400.85" width="1.2" height="1" fill="#8a8a8a"/><rect x="6" y="420.35" width="1.2" height="1" fill="#8a8a8a"/><rect x="4" y="430.00" width="5" height="1.2" fill="#444"/><rect x="6" y="439.85" width="1.2" height="1" fill="#8a8a8a"/><rect x="6" y="459.35" width="1.2" height="1" fill="#8a8a8a"/><rect x="4" y="469.00" width="5" height="1.2" fill="#444"/><rect x="6" y="478.85" width="1.2" height="1" fill="#8a8a8a"/><rect x="6" y="498.35" width="1.2" height="1" fill="#8a8a8a"/><rect x="4" y="508.00" width="5" height="1.2" fill="#444"/><rect x="6" y="517.85" width="1.2" height="1" fill="#8a8a8a"/><rect x="6" y="537.35" width="1.2" height="1" fill="#8a8a8a"/><rect x="4" y="547.00" width="5" height="1.2" fill="#444"/><rect x="6" y="556.85" width="1.2" height="1" fill="#8a8a8a"/><rect x="6" y="576.35" width="1.2" height="1" fill="#8a8a8a"/><rect x="4" y="586.00" width="5" height="1.2" fill="#444"/><rect x="6" y="595.85" width="1.2" height="1" fill="#8a8a8a"/><rect x="6" y="615.35" width="1.2" height="1" fill="#8a8a8a"/><rect x="4" y="625.00" width="5" height="1.2" fill="#444"/><rect x="6" y="634.85" width="1.2" height="1" fill="#8a8a8a"/><rect x="6" y="654.35" width="1.2" height="1" fill="#8a8a8a"/></svg>
<span class="t" style="left:310px;top:303.70px;font-size:11.2px;color:#444;width:0;height:0;"><span class="t" style="left:0;top:0;transform-origin:0 0;transform:rotate(-90deg) translate(-3.100px,1.600px);">7</span></span>
<span class="t" style="left:310px;top:342.70px;font-size:11.2px;color:#444;width:0;height:0;"><span class="t" style="left:0;top:0;transform-origin:0 0;transform:rotate(-90deg) translate(-3.100px,1.600px);">6</span></span>
<span class="t" style="left:310px;top:381.70px;font-size:11.2px;color:#444;width:0;height:0;"><span class="t" style="left:0;top:0;transform-origin:0 0;transform:rotate(-90deg) translate(-3.100px,1.600px);">5</span></span>
<span class="t" style="left:310px;top:420.70px;font-size:11.2px;color:#444;width:0;height:0;"><span class="t" style="left:0;top:0;transform-origin:0 0;transform:rotate(-90deg) translate(-3.100px,1.600px);">4</span></span>
<span class="t" style="left:310px;top:459.70px;font-size:11.2px;color:#444;width:0;height:0;"><span class="t" style="left:0;top:0;transform-origin:0 0;transform:rotate(-90deg) translate(-3.100px,1.600px);">3</span></span>
<span class="t" style="left:310px;top:498.70px;font-size:11.2px;color:#444;width:0;height:0;"><span class="t" style="left:0;top:0;transform-origin:0 0;transform:rotate(-90deg) translate(-3.100px,1.600px);">2</span></span>
<span class="t" style="left:310px;top:537.70px;font-size:11.2px;color:#444;width:0;height:0;"><span class="t" style="left:0;top:0;transform-origin:0 0;transform:rotate(-90deg) translate(-3.100px,1.600px);">1</span></span>
<span class="t" style="left:310px;top:576.70px;font-size:11.2px;color:#444;width:0;height:0;"><span class="t" style="left:0;top:0;transform-origin:0 0;transform:rotate(-90deg) translate(-3.100px,1.600px);">0</span></span>
<span class="t" style="left:310px;top:615.70px;font-size:11.2px;color:#444;width:0;height:0;"><span class="t" style="left:0;top:0;transform-origin:0 0;transform:rotate(-90deg) translate(-3.100px,1.600px);">1</span></span>
<span class="t" style="left:310px;top:654.70px;font-size:11.2px;color:#444;width:0;height:0;"><span class="t" style="left:0;top:0;transform-origin:0 0;transform:rotate(-90deg) translate(-3.100px,1.600px);">2</span></span>
<span class="t" style="left:310px;top:693.70px;font-size:11.2px;color:#444;width:0;height:0;"><span class="t" style="left:0;top:0;transform-origin:0 0;transform:rotate(-90deg) translate(-3.100px,1.600px);">3</span></span>
<span class="t" style="left:310px;top:732.70px;font-size:11.2px;color:#444;width:0;height:0;"><span class="t" style="left:0;top:0;transform-origin:0 0;transform:rotate(-90deg) translate(-3.100px,1.600px);">4</span></span>
<span class="t" style="left:310px;top:771.70px;font-size:11.2px;color:#444;width:0;height:0;"><span class="t" style="left:0;top:0;transform-origin:0 0;transform:rotate(-90deg) translate(-3.100px,1.600px);">5</span></span>
<span class="t" style="left:310px;top:810.70px;font-size:11.2px;color:#444;width:0;height:0;"><span class="t" style="left:0;top:0;transform-origin:0 0;transform:rotate(-90deg) translate(-3.100px,1.600px);">6</span></span>
<span class="t" style="left:310px;top:849.70px;font-size:11.2px;color:#444;width:0;height:0;"><span class="t" style="left:0;top:0;transform-origin:0 0;transform:rotate(-90deg) translate(-3.100px,1.600px);">7</span></span>
<span class="t" style="left:310px;top:888.70px;font-size:11.2px;color:#444;width:0;height:0;"><span class="t" style="left:0;top:0;transform-origin:0 0;transform:rotate(-90deg) translate(-3.100px,1.600px);">8</span></span>
<span class="t" style="left:310px;top:927.70px;font-size:11.2px;color:#444;width:0;height:0;"><span class="t" style="left:0;top:0;transform-origin:0 0;transform:rotate(-90deg) translate(-3.100px,1.600px);">9</span></span>
<div style="left:1904px;top:163px;width:15px;height:751px;background:#DADADA;"></div>
<div style="left:1904px;top:163px;width:15px;height:15px;background:#fff;border:1px solid #ABABAB;box-sizing:border-box;"></div>
<svg style="left:1904px;top:163px;" width="15" height="15" viewBox="0 0 15 15"><path d="M4 9.500h7l-3.500-4z" fill="#606060"/></svg>
<div style="left:1904px;top:448px;width:15px;height:90px;background:#fff;border:1px solid #ABABAB;box-sizing:border-box;"></div>
<div style="left:1904px;top:899px;width:15px;height:15px;background:#fff;border:1px solid #ABABAB;box-sizing:border-box;"></div>
<svg style="left:1904px;top:899px;" width="15" height="15" viewBox="0 0 15 15"><path d="M4 5.500h7l-3.500 4z" fill="#606060"/></svg>
<svg style="left:1904px;top:917px;" width="15" height="30" viewBox="0 0 15 30"><g fill="#606060"><path d="M3.500 6.500h8l-4-4zM3.500 11h8l-4-4z"/><path d="M3.500 20.500h8l-4 4zM3.500 25h8l-4 4z"/></g></svg>
<div style="left:304px;top:970px;width:1600px;height:1px;background:#C6C6C6;"></div>
<span class="t" style="left:315.00px;top:979.13px;font-size:15.2px;color:#505050;transform:scaleX(0.9531);">Klicken Sie, um Notizen hinzuzufügen</span>
<div style="left:457px;top:205px;width:1322px;height:744.5px;background:#fff;border:1px solid #ABABAB;box-sizing:border-box;"></div>
<div style="left:493px;top:241px;width:1250px;height:673px;background:#EBEBEB;"></div>
<div style="left:961.3px;top:430px;width:1.6px;height:296px;background:#1a1a1a;"></div>
<span class="t" style="left:724.50px;top:512.10px;font-size:58px;color:#4472C4;transform:scaleX(0.9574);-webkit-text-stroke:1.3px #EBEBEB;">Table of</span>
<span class="t" style="left:705.50px;top:578.30px;font-size:58px;color:#4472C4;transform:scaleX(0.9714);-webkit-text-stroke:1.3px #EBEBEB;">contents</span>
<span class="t" style="left:1007.40px;top:316.56px;font-size:23.2px;color:#111;transform:scaleX(0.9736);-webkit-text-stroke-width:0.35px;">PART I. Introduction and rationale</span>
<span class="t" style="left:1056.40px;top:357.36px;font-size:23.2px;color:#111;transform:scaleX(0.9846);-webkit-text-stroke-width:0.35px;">Overview of regional innovation in Europe</span>
<span class="t" style="left:1056.40px;top:397.36px;font-size:23.2px;color:#111;transform:scaleX(0.9830);-webkit-text-stroke-width:0.35px;">Overview of regional innovation in China</span>
<span class="t" style="left:1007.40px;top:438.36px;font-size:23.2px;color:#111;transform:scaleX(0.8859);-webkit-text-stroke-width:0.35px;">PART II: REGIONAL INNOVATION POLICY IN EUROPE AND CHINA</span>
<span class="t" style="left:1032.00px;top:478.36px;font-size:23.2px;color:#111;transform:scaleX(0.9519);-webkit-text-stroke-width:0.35px;">Comparative analysis</span>
<span class="t" style="left:1032.00px;top:518.76px;font-size:23.2px;color:#111;transform:scaleX(0.9211);-webkit-text-stroke-width:0.35px;">Case studies:</span>
<span class="t" style="left:1081.30px;top:552.26px;font-size:23.2px;color:#111;transform:scaleX(0.9715);-webkit-text-stroke-width:0.35px;">Europe: Baden-Württemberg, Basque Country Centro</span>
<span class="t" style="left:1081.30px;top:579.06px;font-size:23.2px;color:#111;transform:scaleX(0.9575);-webkit-text-stroke-width:0.35px;">Portugal</span>
<span class="t" style="left:1081.30px;top:613.36px;font-size:23.2px;color:#111;transform:scaleX(0.9435);-webkit-text-stroke-width:0.35px;">China: Jiangsu, Shandong, and Chengdu-Chongqing</span>
<span class="t" style="left:1007.40px;top:653.36px;font-size:23.2px;color:#111;transform:scaleX(0.8896);-webkit-text-stroke-width:0.35px;">PART III: RECOMMENDATIONS</span>
<span class="t" style="left:1007.40px;top:734.36px;font-size:23.2px;color:#111;transform:scaleX(0.8502);-webkit-text-stroke-width:0.35px;">CONCLUSIONS</span>
<span class="t" style="left:1007.40px;top:815.36px;font-size:23.2px;color:#111;transform:scaleX(0.8446);-webkit-text-stroke-width:0.35px;">ANNEXES</span>
<div style="left:1008.0999999999999px;top:364.7px;width:6.4px;height:6.4px;background:#111;border-radius:50%;"></div>
<div style="left:1008.0999999999999px;top:404.7px;width:6.4px;height:6.4px;background:#111;border-radius:50%;"></div>
<div style="left:1008.0999999999999px;top:485.7px;width:6.4px;height:6.4px;background:#111;border-radius:50%;"></div>
<div style="left:1008.0999999999999px;top:526.2px;width:6.4px;height:6.4px;background:#111;border-radius:50%;"></div>
<div style="left:1057.3px;top:559.7px;width:6.4px;height:6.4px;background:#111;border-radius:50%;"></div>
<div style="left:1057.3px;top:620.7px;width:6.4px;height:6.4px;background:#111;border-radius:50%;"></div>
<svg style="left:1255px;top:337px;" width="91" height="4" viewBox="0 0 91 4"><path d="M0 3L2 0.8L4 3L6 0.8L8 3L10 0.8L12 3L14 0.8L16 3L18 0.8L20 3L22 0.8L24 3L26 0.8L28 3L30 0.8L32 3L34 0.8L36 3L38 0.8L40 3L42 0.8L44 3L46 0.8L48 3L50 0.8L52 3L54 0.8L56 3L58 0.8L60 3L62 0.8L64 3L66 0.8L68 3L70 0.8L72 3L74 0.8L76 3L78 0.8L80 3L82 0.8L84 3L86 0.8L88 3L90 0.8L92 3" fill="none" stroke="#F03A2E" stroke-width="1"/></svg>
<svg style="left:1032px;top:499px;" width="128" height="4" viewBox="0 0 128 4"><path d="M0 3L2 0.8L4 3L6 0.8L8 3L10 0.8L12 3L14 0.8L16 3L18 0.8L20 3L22 0.8L24 3L26 0.8L28 3L30 0.8L32 3L34 0.8L36 3L38 0.8L40 3L42 0.8L44 3L46 0.8L48 3L50 0.8L52 3L54 0.8L56 3L58 0.8L60 3L62 0.8L64 3L66 0.8L68 3L70 0.8L72 3L74 0.8L76 3L78 0.8L80 3L82 0.8L84 3L86 0.8L88 3L90 0.8L92 3L94 0.8L96 3L98 0.8L100 3L102 0.8L104 3L106 0.8L108 3L110 0.8L112 3L114 0.8L116 3L118 0.8L120 3L122 0.8L124 3L126 0.8L128 3" fill="none" stroke="#F03A2E" stroke-width="1"/></svg>
<svg style="left:1165px;top:499px;" width="80" height="4" viewBox="0 0 80 4"><path d="M0 3L2 0.8L4 3L6 0.8L8 3L10 0.8L12 3L14 0.8L16 3L18 0.8L20 3L22 0.8L24 3L26 0.8L28 3L30 0.8L32 3L34 0.8L36 3L38 0.8L40 3L42 0.8L44 3L46 0.8L48 3L50 0.8L52 3L54 0.8L56 3L58 0.8L60 3L62 0.8L64 3L66 0.8L68 3L70 0.8L72 3L74 0.8L76 3L78 0.8L80 3" fill="none" stroke="#F03A2E" stroke-width="1"/></svg>
<div style="left:0;top:0;width:0;height:0;-webkit-text-stroke-width:.14px;"><span class="t" style="left:13.00px;top:326.23px;font-size:14.5px;color:#444;transform:scaleX(0.9284);">3</span>
<span class="t" style="left:13.00px;top:622.23px;font-size:14.5px;color:#444;transform:scaleX(0.9284);">5</span>
<span class="t" style="left:13.00px;top:770.23px;font-size:14.5px;color:#444;transform:scaleX(0.9284);">6</span>
<span class="t" style="left:13.00px;top:918.23px;font-size:14.5px;color:#444;transform:scaleX(0.9284);">7</span>
<span class="t" style="left:13.00px;top:474.23px;font-size:14.5px;color:#C43E1C;transform:scaleX(0.9284);">4</span>
<div style="left:35px;top:200px;width:226px;height:108px;background:#fff;border:1px solid #C6C6C6;box-sizing:border-box;"></div>
<div style="left:42px;top:206px;width:212px;height:94.6px;background:#EBEBEB;"></div>
<span class="t" style="left:129.50px;top:288.51px;font-size:3.3px;color:#333;transform:scaleX(1.1778);">7) Propose pilot regions to test the joint actions in Europe and</span>
<span class="t" style="left:129.50px;top:293.51px;font-size:3.3px;color:#333;transform:scaleX(1.1014);">China</span>
<div style="left:35px;top:328px;width:226px;height:128px;background:#fff;border:1px solid #C6C6C6;box-sizing:border-box;"></div>
<span class="t" style="left:52.50px;top:339.72px;font-size:8.6px;color:#111;transform:scaleX(1.0468);">Team</span>
<span class="t" style="left:61.50px;top:356.65px;font-size:4.9px;color:#222;font-weight:700;transform:scaleX(0.9729);">Robert Hassink:</span>
<span class="t" style="left:99.00px;top:356.65px;font-size:4.9px;color:#222;transform:scaleX(1.0390);">PhD degree in</span>
<span class="t" style="left:61.50px;top:362.65px;font-size:4.9px;color:#222;transform:scaleX(1.0206);">Economic Geography</span>
<span class="t" style="left:61.50px;top:369.55px;font-size:4.9px;color:#222;transform:scaleX(1.0563);">• Professor at University of Kiel</span>
<span class="t" style="left:70.00px;top:377.78px;font-size:3.8px;color:#222;transform:scaleX(1.1274);">• Theories and Paradigms of Economic</span>
<span class="t" style="left:74.00px;top:382.78px;font-size:3.8px;color:#222;transform:scaleX(1.1172);">Geography</span>
<span class="t" style="left:70.00px;top:388.78px;font-size:3.8px;color:#222;transform:scaleX(1.1338);">• Evolutionary Economic Geography</span>
<span class="t" style="left:70.00px;top:394.78px;font-size:3.8px;color:#222;transform:scaleX(1.1409);">• Industrial Restructuring and Regional</span>
<span class="t" style="left:74.00px;top:399.78px;font-size:3.8px;color:#222;transform:scaleX(1.1219);">Economic Development</span>
<span class="t" style="left:70.00px;top:406.78px;font-size:3.8px;color:#222;transform:scaleX(1.1455);">• Regional Innovation Policy</span>
<span class="t" style="left:159.50px;top:357.65px;font-size:4.9px;color:#222;font-weight:700;transform:scaleX(0.9328);">Liu Lun:</span>
<span class="t" style="left:179.00px;top:357.65px;font-size:4.9px;color:#222;transform:scaleX(1.0028);">PhD. degree in Land</span>
<span class="t" style="left:159.50px;top:363.65px;font-size:4.9px;color:#222;transform:scaleX(1.0299);">Economy</span>
<span class="t" style="left:159.50px;top:370.55px;font-size:4.9px;color:#222;transform:scaleX(1.0426);">• Professor at Peking University</span>
<span class="t" style="left:168.00px;top:378.78px;font-size:3.8px;color:#222;transform:scaleX(1.1539);">• Urban development</span>
<span class="t" style="left:168.00px;top:384.78px;font-size:3.8px;color:#222;transform:scaleX(1.1562);">• Spatial planning</span>
<span class="t" style="left:168.00px;top:390.78px;font-size:3.8px;color:#222;transform:scaleX(1.1404);">• Urban management</span>
<span class="t" style="left:51.00px;top:420.09px;font-size:3.2px;color:#333;font-style:italic;transform:scaleX(1.1992);">Coordinated by:</span>
<span class="t" style="left:51.00px;top:425.09px;font-size:3.2px;color:#333;font-weight:700;font-style:italic;transform:scaleX(1.0579);">Casa Asia</span>
<span class="t" style="left:51.00px;top:430.09px;font-size:3.2px;color:#333;font-style:italic;transform:scaleX(1.1985);">Casa Asia is a public consortium consisting of the Spanish Ministry of Foreign Affairs, European Union and</span>
<span class="t" style="left:51.00px;top:435.09px;font-size:3.2px;color:#333;font-style:italic;transform:scaleX(1.2146);">Cooperation, the Government of Catalonia, and the city halls of Barcelona and Madrid</span>
<span class="t" style="left:51.00px;top:440.09px;font-size:3.2px;color:#333;font-weight:700;transform:scaleX(1.1194);">Supported by</span>
<span class="t" style="left:51.00px;top:445.09px;font-size:3.2px;color:#333;font-style:italic;transform:scaleX(1.1613);">Dr Ronald Hall, Active Senior Advisor, EU Commission, DG REGIO</span>
<span class="t" style="left:51.00px;top:450.79px;font-size:3.2px;color:#333;font-style:italic;transform:scaleX(1.1587);">Pablo Gándara, Team Leader IUC Asia</span>
<div style="left:32px;top:473px;width:232px;height:134px;background:#fff;border:3px solid #7B1018;box-sizing:border-box;"></div>
<div style="left:36px;top:477px;width:1320px;height:742px;transform-origin:0 0;transform:scale(0.16970);-webkit-text-stroke-width:.800px;"><div style="left:-458px;top:-206px;width:0;height:0;"><div style="left:493px;top:241px;width:1250px;height:673px;background:#EBEBEB;"></div>
<div style="left:961.3px;top:430px;width:1.6px;height:296px;background:#1a1a1a;"></div>
<span class="t" style="left:724.50px;top:512.10px;font-size:58px;color:#4472C4;transform:scaleX(0.9574);-webkit-text-stroke:1.3px #EBEBEB;">Table of</span>
<span class="t" style="left:705.50px;top:578.30px;font-size:58px;color:#4472C4;transform:scaleX(0.9714);-webkit-text-stroke:1.3px #EBEBEB;">contents</span>
<span class="t" style="left:1007.40px;top:316.56px;font-size:23.2px;color:#111;transform:scaleX(0.9736);-webkit-text-stroke-width:0.8px;">PART I. Introduction and rationale</span>
<span class="t" style="left:1056.40px;top:357.36px;font-size:23.2px;color:#111;transform:scaleX(0.9846);-webkit-text-stroke-width:0.8px;">Overview of regional innovation in Europe</span>
<span class="t" style="left:1056.40px;top:397.36px;font-size:23.2px;color:#111;transform:scaleX(0.9830);-webkit-text-stroke-width:0.8px;">Overview of regional innovation in China</span>
<span class="t" style="left:1007.40px;top:438.36px;font-size:23.2px;color:#111;transform:scaleX(0.8859);-webkit-text-stroke-width:0.8px;">PART II: REGIONAL INNOVATION POLICY IN EUROPE AND CHINA</span>
<span class="t" style="left:1032.00px;top:478.36px;font-size:23.2px;color:#111;transform:scaleX(0.9519);-webkit-text-stroke-width:0.8px;">Comparative analysis</span>
<span class="t" style="left:1032.00px;top:518.76px;font-size:23.2px;color:#111;transform:scaleX(0.9211);-webkit-text-stroke-width:0.8px;">Case studies:</span>
<span class="t" style="left:1081.30px;top:552.26px;font-size:23.2px;color:#111;transform:scaleX(0.9715);-webkit-text-stroke-width:0.8px;">Europe: Baden-Württemberg, Basque Country Centro</span>
<span class="t" style="left:1081.30px;top:579.06px;font-size:23.2px;color:#111;transform:scaleX(0.9575);-webkit-text-stroke-width:0.8px;">Portugal</span>
<span class="t" style="left:1081.30px;top:613.36px;font-size:23.2px;color:#111;transform:scaleX(0.9435);-webkit-text-stroke-width:0.8px;">China: Jiangsu, Shandong, and Chengdu-Chongqing</span>
<span class="t" style="left:1007.40px;top:653.36px;font-size:23.2px;color:#111;transform:scaleX(0.8896);-webkit-text-stroke-width:0.8px;">PART III: RECOMMENDATIONS</span>
<span class="t" style="left:1007.40px;top:734.36px;font-size:23.2px;color:#111;transform:scaleX(0.8502);-webkit-text-stroke-width:0.8px;">CONCLUSIONS</span>
<span class="t" style="left:1007.40px;top:815.36px;font-size:23.2px;color:#111;transform:scaleX(0.8446);-webkit-text-stroke-width:0.8px;">ANNEXES</span>
<div style="left:1008.0999999999999px;top:364.7px;width:6.4px;height:6.4px;background:#111;border-radius:50%;"></div>
<div style="left:1008.0999999999999px;top:404.7px;width:6.4px;height:6.4px;background:#111;border-radius:50%;"></div>
<div style="left:1008.0999999999999px;top:485.7px;width:6.4px;height:6.4px;background:#111;border-radius:50%;"></div>
<div style="left:1008.0999999999999px;top:526.2px;width:6.4px;height:6.4px;background:#111;border-radius:50%;"></div>
<div style="left:1057.3px;top:559.7px;width:6.4px;height:6.4px;background:#111;border-radius:50%;"></div>
<div style="left:1057.3px;top:620.7px;width:6.4px;height:6.4px;background:#111;border-radius:50%;"></div></div></div>
<div style="left:35px;top:624px;width:226px;height:128px;background:#fff;border:1px solid #C6C6C6;box-sizing:border-box;"></div>
<div style="left:42px;top:630.3px;width:212px;height:114.2px;background:#EBEBEB;"></div>
<div style="left:122px;top:663px;width:1px;height:51px;background:#222;"></div>
<span class="t" style="left:63.00px;top:683.24px;font-size:7.4px;color:#4472C4;transform:scaleX(1.1934);-webkit-text-stroke-width:0;">Case studies</span>
<span class="t" style="left:129.50px;top:659.11px;font-size:4.6px;color:#222;transform:scaleX(1.1413);">• Degree of decentralization</span>
<span class="t" style="left:129.50px;top:667.11px;font-size:4.6px;color:#222;transform:scaleX(1.0772);">• Innovation level</span>
<span class="t" style="left:129.50px;top:676.11px;font-size:4.6px;color:#222;transform:scaleX(1.1513);">• Role of innovation support platforms</span>
<span class="t" style="left:129.50px;top:684.11px;font-size:4.6px;color:#222;transform:scaleX(1.1574);">• Priority sectors</span>
<span class="t" style="left:129.50px;top:693.11px;font-size:4.6px;color:#222;transform:scaleX(1.1090);">• Governance (Stakeholders)</span>
<span class="t" style="left:129.50px;top:701.11px;font-size:4.6px;color:#222;transform:scaleX(1.1622);">• Monitoring and evaluation</span>
<span class="t" style="left:129.50px;top:710.11px;font-size:4.6px;color:#222;transform:scaleX(1.1337);">• Indicators: R&amp;D intensity, education level,</span>
<span class="t" style="left:133.50px;top:716.11px;font-size:4.6px;color:#222;transform:scaleX(1.1239);">scientific publications, patents, etc.</span>
<div style="left:35px;top:772px;width:226px;height:128px;background:#fff;border:1px solid #C6C6C6;box-sizing:border-box;"></div>
<div style="left:42px;top:778.3px;width:212px;height:114.2px;background:#EBEBEB;"></div>
<div style="left:122px;top:811px;width:1px;height:51px;background:#222;"></div>
<span class="t" style="left:63.00px;top:831.24px;font-size:7.4px;color:#4472C4;transform:scaleX(1.2294);-webkit-text-stroke-width:0;">First insights</span>
<span class="t" style="left:129.50px;top:796.19px;font-size:4.5px;color:#222;transform:scaleX(1.1434);">• Identification of regions in Europe and China</span>
<span class="t" style="left:133.50px;top:802.19px;font-size:4.5px;color:#222;transform:scaleX(1.0608);">based on innovation capabilities.</span>
<span class="t" style="left:129.50px;top:810.19px;font-size:4.5px;color:#222;transform:scaleX(1.1445);">• Importance of China’s city cluster plan (Beijing-</span>
<span class="t" style="left:133.50px;top:816.19px;font-size:4.5px;color:#222;transform:scaleX(1.1134);">Tianjin-Hebei)</span>
<span class="t" style="left:129.50px;top:825.19px;font-size:4.5px;color:#222;transform:scaleX(1.1369);">• China has made progress to combine innovation</span>
<span class="t" style="left:133.50px;top:831.19px;font-size:4.5px;color:#222;transform:scaleX(1.1594);">policy action engaging national and provincial</span>
<span class="t" style="left:133.50px;top:837.19px;font-size:4.5px;color:#222;transform:scaleX(1.1373);">administrative levels.</span>
<span class="t" style="left:129.50px;top:845.69px;font-size:4.5px;color:#222;transform:scaleX(1.1348);">• Increasing dialogue</span>
<span class="t" style="left:133.50px;top:851.69px;font-size:4.5px;color:#222;transform:scaleX(1.1534);">and participation of more stakeholders</span>
<span class="t" style="left:129.50px;top:860.19px;font-size:4.5px;color:#222;transform:scaleX(1.1350);">• The role of high-tech zones become increasingly</span>
<span class="t" style="left:133.50px;top:866.19px;font-size:4.5px;color:#222;transform:scaleX(1.1778);">important in China.</span>
<span class="t" style="left:129.50px;top:875.19px;font-size:4.5px;color:#222;transform:scaleX(1.1360);">• Acknowledgment of local assets and resources</span>
<div style="left:35px;top:920px;width:226px;height:128px;background:#fff;border:1px solid #C6C6C6;box-sizing:border-box;"></div>
<span class="t" style="left:53.00px;top:935.86px;font-size:8.2px;color:#111;transform:scaleX(1.1206);">Edition and design</span>
<svg style="left:36px;top:921px" width="224" height="97" viewBox="0 0 224 97">
<defs><pattern id="tl" width="4" height="2" patternUnits="userSpaceOnUse"><rect width="4" height="2" fill="#fff"/><rect y=".100" width="4" height="1" fill="#6a6a6a"/></pattern>
<pattern id="tl2" width="4" height="2" patternUnits="userSpaceOnUse"><rect width="4" height="2" fill="#fff"/><rect y=".200" width="4" height=".800" fill="#c4c4c4"/></pattern></defs>
<g fill="#6FB2DA"><rect x="16.500" y="33.300" width="10" height=".900" opacity=".8"/><rect x="16.500" y="35.200" width="51.200" height=".350" opacity=".6"/>
<rect x="16.500" y="49.300" width="17" height=".900" opacity=".8"/><rect x="16.500" y="51.400" width="51.200" height=".350" opacity=".6"/>
<rect x="16.500" y="71.400" width="6.500" height=".900" opacity=".8"/><rect x="16.500" y="73.300" width="51.200" height=".350" opacity=".6"/></g>
<rect x="16.500" y="37.700" width="6.500" height="6.900" fill="#fff" stroke="#e4e4e4" stroke-width=".300"/><rect x="23" y="37.700" width="6.600" height="6.900" fill="#E96C7C"/><rect x="29.600" y="37.700" width="6.600" height="6.900" fill="#EFA03C"/><rect x="36.200" y="37.700" width="6.500" height="6.900" fill="#27658F"/><rect x="42.700" y="37.700" width="6.300" height="6.900" fill="#12334A"/><rect x="49" y="37.700" width="6.500" height="6.900" fill="#BFE6F2"/><rect x="55.500" y="37.700" width="6.600" height="6.900" fill="#16225E"/><rect x="62.100" y="37.700" width="6.300" height="6.900" fill="#1E1E1E"/>
<rect x="16.500" y="61.300" width="51" height="7" fill="url(#tl2)"/>
<rect x="17.200" y="77" width="10" height="1.300" fill="#16225E"/><rect x="27.200" y="77" width="11.200" height="1.300" fill="#E96C7C"/><rect x="17.200" y="79.400" width="6.800" height="1.300" fill="#16225E"/><rect x="24" y="79.400" width="5.600" height="1.300" fill="#E96C7C"/>
<circle cx="30.250" cy="97.750" r="9.700" fill="none" stroke="#0F6A96" stroke-width="8.100"/>
<circle cx="50.900" cy="83.400" r="4.400" fill="#CDEAF4"/><circle cx="59.400" cy="83.400" r="5.600" fill="#2A2C72"/><circle cx="55.250" cy="88" r="3.400" fill="#EE9A2E"/><circle cx="62.750" cy="86.750" r="3.100" fill="#2F6FA0"/>
<rect x="135.900" y="26.750" width="25.600" height="7.800" fill="url(#tl)"/><rect x="135.900" y="36" width="25.600" height="7" fill="url(#tl)"/><rect x="135.900" y="44.300" width="25.600" height="9.700" fill="url(#tl)"/><rect x="135.900" y="55.500" width="25.600" height="11" fill="url(#tl)"/><rect x="135.900" y="68" width="25.600" height="6.600" fill="url(#tl)"/>
<rect x="176.500" y="54.600" width="25.600" height="2.500" fill="url(#tl)"/><rect x="176.500" y="58.300" width="25.600" height="8.200" fill="url(#tl)"/><rect x="176.500" y="68" width="25.600" height="6.600" fill="url(#tl)"/>
<rect x="102.100" y="77.750" width="22" height="8.400" fill="url(#tl)"/><rect x="102.100" y="87.500" width="22" height="10" fill="url(#tl)"/>
<rect x="137.100" y="77.750" width="23" height="4" fill="url(#tl)"/><rect x="137.100" y="83" width="23" height="6.200" fill="url(#tl)"/><rect x="137.100" y="90.500" width="23" height="7" fill="url(#tl)"/>
<g fill="none" stroke="#d2d2d2" stroke-width=".350"><rect x="172.750" y="86.500" width="26.800" height="11"/><path d="M181.500 86.500v11M190.500 86.500v11M172.750 90h26.800M172.750 93.500h26.800"/></g><rect x="172.750" y="84" width="21" height=".500" fill="#777"/>
<rect x="173" y="89" width="6" height="4" fill="url(#tl2)"/><rect x="182" y="87" width="7" height="10" fill="url(#tl2)"/><rect x="191" y="87" width="7" height="3" fill="url(#tl2)"/>
<rect x="136.500" y="22.700" width="8" height=".700" fill="#F2B46A"/><rect x="177" y="22.700" width="4" height=".700" fill="#F2B46A"/><rect x="129.600" y="89.700" width="6.500" height="1.600" fill="#F6C58A"/><rect x="127" y="72.700" width="6.500" height=".500" fill="#bbb"/><rect x="168.500" y="54.800" width="5" height=".500" fill="#bbb"/>
<path d="M170 33.500c1-3 3.500-4.800 6.500-4.600 2.500.200 4 1 6.500.200 1-2 2.500-2.800 4-2.400 1 1.200 1.600 2.600.600 4.200 1.200 1.800 1 3.800-.400 5.400-.600 2.400-2 4-4 4.600-1.600-.400-2.600-1.400-3-3-1.800 0-3.400-.800-4.600-2.200-2.200.400-4-.400-5.600-2.200z" fill="#F6E71B"/>
<path d="M183 29.100c1-2 2.500-2.800 4-2.400 1 1.200 1.600 2.600.600 4.200 1.200 1.800 1 3.800-.400 5.400-.600 2.400-2 4-4 4.600-1.200-.300-2-.900-2.600-1.900 2-1.600 3-3.600 2.800-6-.600-1.200-.800-2.600-.400-3.900z" fill="#EE8E1E"/>
<path d="M185.500 33c1 .800 1.400 2 1 3.400-.400 1.800-1.400 3-2.800 3.600.200-2.400.800-4.800 1.800-7z" fill="#D8431C"/><path d="M178.500 36.500l3 .500.500 2.500-2.500.500z" fill="#F1A020"/>
<g><path d="M192.500 28.500c1.500-2.500 4-3.800 6.500-3.600l2.800-.800c.300 1.800-.500 3.200-2 4-.500 1.600-1.600 2.600-3.200 2.800-1.600.200-3-.600-4.100-2.400z" fill="#F2A51E"/><path d="M198 27c1.500-.400 2.800-1.200 3.800-2.900.300 1.800-.500 3.200-2 4-.300 1-.900 1.800-1.700 2.300-.600-1.100-.600-2.300-.100-3.400z" fill="#E0611A"/>
<path d="M192.500 38c1.500-2.500 4-3.800 6.500-3.600l2.800-.800c.300 1.800-.500 3.200-2 4-.500 1.600-1.600 2.600-3.200 2.800-1.600.200-3-.600-4.100-2.400z" fill="#F6E71B"/><path d="M198 36.500c1.500-.400 2.800-1.200 3.800-2.900.300 1.800-.500 3.200-2 4-.300 1-.900 1.800-1.700 2.300-.600-1.100-.600-2.300-.100-3.400z" fill="#EF8C1C"/>
<path d="M192.500 47c1.500-2.500 4-3.800 6.500-3.600l2.800-.800c.300 1.800-.500 3.200-2 4-.500 1.600-1.600 2.600-3.200 2.800-1.600.200-3-.600-4.100-2.400z" fill="#F6E71B"/><path d="M198.500 46c1.300-.400 2.400-1.300 3.300-3.400.300 1.800-.500 3.200-2 4-.300 1-.900 1.800-1.700 2.300-.400-1-.200-2 .400-2.900z" fill="#EF8C1C"/></g>
<g fill="#E8902A"><rect x="170.500" y="42" width="2" height="2.500"/><rect x="189.500" y="33" width="1.600" height="2"/><rect x="189.500" y="42" width="1.600" height="2"/><rect x="189.500" y="50.500" width="1.600" height="2"/></g>
</svg>
<span class="t" style="left:52.50px;top:975.05px;font-size:3.6px;color:#333;transform:scaleX(0.8341);">The spectacle before us was indeed</span>
<span class="t" style="left:52.50px;top:978.15px;font-size:3.6px;color:#333;transform:scaleX(0.8474);">sublime</span></div>
<div style="left:7px;top:6px;width:334px;height:278.6px;background:#F3F3F3;box-shadow:0 1px 7px rgba(0,0,0,.45);border:2px solid #fff;border-bottom-width:1px;box-sizing:border-box;"></div>
<div style="left:161.8px;top:19.4px;width:24.4px;height:24.4px;background:#fff;border-radius:50%;box-shadow:0 0 1.500px rgba(0,0,0,.2);"></div>
<svg style="left:166px;top:24px;" width="16" height="16" viewBox="0 0 16 16"><g fill="none" stroke="#2a2a2a" stroke-width="1.050" stroke-linejoin="round"><path d="M6.500 2.300L2.300 6.500C4.500 7.500 6.300 8.500 6.100 10.500C6 12 6.500 13.500 7.300 13.700L13.900 7.300C13.500 6 11.500 5.800 10.300 5.900C8.800 5.900 7.500 4 6.500 2.300Z"/><path d="M10.600 10.400L13.900 13.700"/></g></svg>
<div style="left:120.5px;top:46.5px;width:107px;height:107px;background:#F4F4F4;border-radius:50%;border:1px solid #9a9a9a;box-sizing:border-box;box-shadow:0 0 0 2px #fbfbfb;"></div>
<span class="t" style="left:141.00px;top:74.10px;font-size:49.5px;color:#6b6b6b;transform:scaleX(0.9231);-webkit-text-stroke:.900px #F4F4F4;">RN</span>
<div style="left:9px;top:167px;width:123px;height:24px;background:#FBFBFB;"></div>
<svg style="left:14px;top:171.5px;" width="14" height="14" viewBox="0 0 14 14"><g fill="none" stroke="#444" stroke-width="1"><path d="M3 8.500V6.500a4 4 0 0 1 8 0v2"/><path d="M3.200 6.200c-1.500 0-2 1-2 2s.500 2 2 2zM10.800 6.200c1.500 0 2 1 2 2s-.500 2-2 2z"/><path d="M11 10.200c0 1.500-1.500 2.300-3.500 2.300"/></g><circle cx="7" cy="12.500" r="1" fill="#444"/></svg>
<span class="t" style="left:35.00px;top:171.64px;font-size:14.6px;color:#222;transform:scaleX(0.9095);">Rudolf Niessler</span>
<div style="left:9px;top:191px;width:331px;height:92.6px;background:#F2F2F2;border:1px solid #222;border-bottom:none;box-sizing:border-box;"></div>
<div style="left:10px;top:192px;width:164px;height:91.3px;background:#F2F2F2;border:2px solid #1E9FDD;box-sizing:border-box;box-shadow:inset 0 0 2.500px #7CC8EE;"></div>
<div style="left:12px;top:266px;width:160px;height:15px;background:#FBFBFB;"></div>
<div style="left:175px;top:266px;width:164px;height:17px;background:#FBFBFB;"></div>
<div style="left:72.5px;top:209px;width:40px;height:40px;background:#F4F4F4;border-radius:50%;border:1px solid #9a9a9a;box-sizing:border-box;box-shadow:0 0 0 1.500px #fbfbfb;"></div>
<div style="left:236.5px;top:209px;width:40px;height:40px;background:#F4F4F4;border-radius:50%;border:1px solid #9a9a9a;box-sizing:border-box;box-shadow:0 0 0 1.500px #fbfbfb;"></div>
<span class="t" style="left:79.25px;top:219.54px;font-size:19.8px;color:#6b6b6b;transform:scaleX(0.9273);-webkit-text-stroke:.300px #F4F4F4;">RN</span>
<span class="t" style="left:250.50px;top:219.54px;font-size:19.8px;color:#6b6b6b;transform:scaleX(0.8393);-webkit-text-stroke:.300px #F4F4F4;">R</span>
<div style="left:19px;top:226px;width:24px;height:24px;background:#9D9D9D;border-radius:50%;"></div>
<svg style="left:19px;top:226px;" width="24" height="24" viewBox="0 0 24 24"><path d="M14 7l-5 5 5 5" fill="none" stroke="#B8B8B8" stroke-width="1.300"/></svg>
<div style="left:305px;top:226px;width:24px;height:24px;background:#3F3F3F;border-radius:50%;"></div>
<svg style="left:305px;top:226px;" width="24" height="24" viewBox="0 0 24 24"><path d="M10 7l5 5-5 5" fill="none" stroke="#fff" stroke-width="1.300"/></svg>
<svg style="left:15px;top:268.3px;" width="13.020000000000001" height="13.020000000000001" viewBox="0 0 14 14"><g fill="none" stroke="#3a3a3a" stroke-width="1"><path d="M3 8.500V6.500a4 4 0 0 1 8 0v2"/><path d="M3.200 6.200c-1.500 0-2 1-2 2s.500 2 2 2zM10.800 6.200c1.500 0 2 1 2 2s-.500 2-2 2z"/><path d="M11 10.200c0 1.500-1.500 2.300-3.500 2.300"/></g><circle cx="7" cy="12.500" r="1" fill="#3a3a3a"/></svg>
<svg style="left:178px;top:268.3px;" width="13.020000000000001" height="13.020000000000001" viewBox="0 0 14 14"><g fill="none" stroke="#3a3a3a" stroke-width="1"><path d="M3 8.500V6.500a4 4 0 0 1 8 0v2"/><path d="M3.200 6.200c-1.500 0-2 1-2 2s.500 2 2 2zM10.800 6.200c1.500 0 2 1 2 2s-.500 2-2 2z"/><path d="M11 10.200c0 1.500-1.500 2.300-3.500 2.300"/></g><circle cx="7" cy="12.500" r="1" fill="#3a3a3a"/></svg>
<span class="t" style="left:36.00px;top:271.08px;font-size:10.3px;color:#111;transform:scaleX(0.8449);">Rudolf Niessler</span>
<span class="t" style="left:199.00px;top:271.08px;font-size:10.3px;color:#111;transform:scaleX(0.8272);">Ronnie</span>
<svg style="left:321px;top:267px;" width="12" height="16" viewBox="0 0 12 16"><g fill="none" stroke="#F0453C" stroke-width=".850"><rect x="4" y="1.500" width="4" height="7.500" rx="2"/><path d="M2 7.500c0 5 8 5 8 0M6 11.500v2.500M4 14h4M10 1L2.500 13.500"/></g></svg>
<div style="left:0px;top:1018px;width:1920px;height:22px;background:#F3F2F1;border-top:1px solid #C6C6C6;box-sizing:border-box;"></div>
<span class="t" style="left:8.50px;top:1022.51px;font-size:11.8px;color:#444;transform:scaleX(0.9475);">Folie 4 von 8</span>
<svg style="left:91px;top:1021px;" width="18" height="16" viewBox="0 0 18 16"><g fill="none" stroke="#444" stroke-width="1.100"><path d="M8.500 13.500c-2-1.500-4-1.500-6 0V2.500c2-1.500 4-1.500 6 0zM8.500 2.500c1.500-1.200 3-1.400 4.500-.800V8"/><path d="M10 9.500l5 5M15 9.500l-5 5"/></g></svg>
<span class="t" style="left:124.50px;top:1022.51px;font-size:11.8px;color:#444;transform:scaleX(0.9583);">Deutsch (Deutschland)</span>
<svg style="left:1475.5px;top:1019px;" width="18" height="20" viewBox="0 0 18 20"><g fill="none" stroke="#444" stroke-width="1.100"><path d="M5.500 5.500l3-3 3 3M1 9.500h15M1 13.500h15M1 17.500h15"/></g></svg>
<span class="t" style="left:1494.50px;top:1022.59px;font-size:12.3px;color:#444;transform:scaleX(0.9232);">Notizen</span>
<div style="left:1553px;top:1019px;width:40px;height:21px;background:#C8C6C4;"></div>
<svg style="left:1564px;top:1020px;" width="18" height="18" viewBox="0 0 18 18"><g fill="none" stroke="#262626" stroke-width="1.200"><rect x="2.500" y="3.500" width="13" height="11"/><path d="M5.500 3.500v11M5.500 11.500h10"/><rect x="8.500" y="6" width="4.500" height="3"/></g></svg>
<svg style="left:1604px;top:1020px;" width="18" height="18" viewBox="0 0 18 18"><g fill="none" stroke="#444" stroke-width="1.200"><rect x="3" y="3.500" width="4.500" height="4"/><rect x="10.500" y="3.500" width="4.500" height="4"/><rect x="3" y="10.500" width="4.500" height="4"/><rect x="10.500" y="10.500" width="4.500" height="4"/></g></svg>
<svg style="left:1644px;top:1020px;" width="18" height="18" viewBox="0 0 18 18"><g fill="none" stroke="#444" stroke-width="1.100"><path d="M9 4.500c-2-1.500-4-1.500-6-.500v10c2-1 4-1 6 .500 2-1.500 4-1.500 6-.500v-10c-2-1-4-1-6 .500zM9 4.500v10"/><path d="M4.500 6.500h3M4.500 8.500h3M4.500 10.500h3M10.500 6.500h3M10.500 8.500h3M10.500 10.500h3" stroke-width=".800"/></g></svg>
<svg style="left:1683px;top:1020px;" width="18" height="18" viewBox="0 0 18 18"><g fill="none" stroke="#444" stroke-width="1.200"><path d="M3 3.500h12M4 3.500v6.500h10V3.500M9 10v5M6 15.500h6"/><rect x="8" y="5.500" width="2.500" height="2"/></g></svg>
<div style="left:1719px;top:1028px;width:7.5px;height:1.3px;background:#444;"></div>
<div style="left:1733px;top:1028.5px;width:99px;height:1px;background:#8A8886;"></div>
<div style="left:1781.5px;top:1023px;width:4.5px;height:11px;background:#767676;"></div>
<div style="left:1836px;top:1028px;width:9px;height:1.3px;background:#444;"></div>
<div style="left:1839.9px;top:1024px;width:1.3px;height:9px;background:#444;"></div>
<span class="t" style="left:1858.50px;top:1022.34px;font-size:12px;color:#444;transform:scaleX(0.8669);">104 %</span>
<svg style="left:1899px;top:1020px;" width="18" height="18" viewBox="0 0 18 18"><g fill="none" stroke="#444" stroke-width="1.100"><rect x="6" y="6" width="6" height="6"/><path d="M7 3.500l2-2 2 2M7 14.500l2 2 2-2M3.500 7l-2 2 2 2M14.500 7l2 2-2 2"/></g></svg>
<div style="left:0px;top:1040px;width:1920px;height:40px;background:#0A2C49;"></div>
<div style="left:200px;top:1078px;width:40px;height:2px;background:#8FC0E8;"></div>
<div style="left:249px;top:1078px;width:40px;height:2px;background:#8FC0E8;"></div>
<div style="left:347px;top:1078px;width:40px;height:2px;background:#8FC0E8;"></div>
<div style="left:396px;top:1078px;width:40px;height:2px;background:#8FC0E8;"></div>
<div style="left:445px;top:1078px;width:40px;height:2px;background:#8FC0E8;"></div>
<div style="left:494px;top:1078px;width:40px;height:2px;background:#8FC0E8;"></div>
<div style="left:543px;top:1078px;width:40px;height:2px;background:#8FC0E8;"></div>
<div style="left:739px;top:1078px;width:40px;height:2px;background:#8FC0E8;"></div>
<div style="left:788px;top:1078px;width:40px;height:2px;background:#8FC0E8;"></div>
<div style="left:837px;top:1078px;width:40px;height:2px;background:#8FC0E8;"></div>
<div style="left:886px;top:1078px;width:40px;height:2px;background:#8FC0E8;"></div>
<div style="left:232px;top:1078px;width:8px;height:2px;background:#5E7D9A;"></div>
<div style="left:380px;top:1078px;width:8px;height:2px;background:#5E7D9A;"></div>
<div style="left:527px;top:1078px;width:8px;height:2px;background:#5E7D9A;"></div>
<div style="left:771px;top:1078px;width:8px;height:2px;background:#5E7D9A;"></div>
<svg style="left:8px;top:1046px;" width="32" height="28" viewBox="0 0 32 28"><g fill="#fff"><path d="M0 2.400l6.800-1v7.300H0zM7.500 1.300L16.300 0v8.700H7.500zM0 9.400h6.800v7.300l-6.800-1zM7.500 9.400h8.800V18l-8.800-1.300z" transform="translate(7.800 5.600)"/></g></svg>
<svg style="left:60px;top:1048px;" width="26" height="26" viewBox="0 0 26 26"><g fill="none" stroke="#fff" stroke-width="1.350"><circle cx="15" cy="9.800" r="5.200"/><path d="M11.300 13.600L4.300 20.300"/></g></svg>
<svg style="left:108px;top:1048px;" width="24" height="24" viewBox="0 0 24 24"><circle cx="12" cy="12" r="6.900" fill="none" stroke="#fff" stroke-width="1.900"/></svg>
<svg style="left:158px;top:1046px;" width="26" height="28" viewBox="0 0 26 28"><path d="M1.500 8.500h22v16a1.500 1.500 0 0 1-1.500 1.500H3a1.500 1.500 0 0 1-1.500-1.500z" fill="#fff"/><path d="M8 8.500c0-7 9-7 9 0" fill="none" stroke="#fff" stroke-width="1.300"/><path d="M10 8c.500-5.500 8-5 8 .500" fill="none" stroke="#ddd" stroke-width="1"/><rect x="7.500" y="12" width="4.500" height="4.500" fill="#F25022"/><rect x="13" y="12" width="4.500" height="4.500" fill="#7FBA00"/><rect x="7.500" y="17.500" width="4.500" height="4.500" fill="#00A4EF"/><rect x="13" y="17.500" width="4.500" height="4.500" fill="#FFB900"/></svg>
<svg style="left:207px;top:1047px;" width="26" height="26" viewBox="0 0 26 26"><rect x="9" y="2" width="15" height="20" rx="1.500" fill="#1490DF"/><rect x="9" y="2" width="15" height="7" fill="#28A8EA"/><rect x="16" y="2" width="8" height="7" fill="#50D9FF"/><path d="M9 14l7.500 5 7.500-5v8a1.500 1.500 0 0 1-1.500 1.500H10.500A1.500 1.500 0 0 1 9 22z" fill="#0A5FA8"/><rect x="1" y="6.500" width="13" height="13" rx="1.500" fill="#0F6CBD"/></svg>
<span class="t" style="left:210.50px;top:1054.91px;font-size:10.5px;color:#fff;font-weight:700;transform:scaleX(0.9790);">O</span>
<svg style="left:256px;top:1047px;" width="26" height="26" viewBox="0 0 26 26"><rect x="8" y="2" width="16" height="22" rx="1.500" fill="#21A366"/><rect x="8" y="2" width="8" height="7.500" fill="#33C481"/><rect x="16" y="9.500" width="8" height="7" fill="#107C41"/><rect x="8" y="16.500" width="16" height="7.500" rx="1" fill="#185C37"/><rect x="1" y="6.500" width="13" height="13" rx="1.500" fill="#107C41"/></svg>
<span class="t" style="left:259.75px;top:1054.91px;font-size:10.5px;color:#fff;font-weight:700;transform:scaleX(1.0690);">X</span>
<svg style="left:305px;top:1046px;" width="28" height="28" viewBox="0 0 28 28"><defs><radialGradient id="ffg" cx=".7" cy=".2" r=".9"><stop offset="0" stop-color="#FFE226"/><stop offset=".45" stop-color="#FF8A16"/><stop offset="1" stop-color="#E31587"/></radialGradient></defs><path d="M14 3c2.500 1.500 4 3 4.500 5 2-1 2-3.500 1.500-5C24 6 26 10 25 16c-1 5.500-5.500 9.500-11 9.500S3 21.500 2.500 16c-.300-4 1-7 3.500-9 0 1.500.500 2.500 1.500 3 1-3.500 3.500-5.500 6.500-7z" fill="url(#ffg)"/><circle cx="13.500" cy="15.500" r="5.800" fill="#7542E5"/><path d="M8 13c2-2.500 5.500-2.500 8-1 1.500 1 1 3-1 3-1.500 0-2 1.500-3.500 1.500-2 0-3.500-1.500-3.500-3.500z" fill="#FF9A1F" opacity=".9"/></svg>
<svg style="left:354px;top:1047px;" width="26" height="26" viewBox="0 0 26 26"><rect x="8" y="2" width="16" height="22" rx="1.500" fill="#2B7CD3"/><rect x="8" y="2" width="16" height="5.500" fill="#41A5EE"/><rect x="8" y="13" width="16" height="5.500" fill="#185ABD"/><rect x="8" y="18.500" width="16" height="5.500" rx="1" fill="#103F91"/><rect x="1" y="6.500" width="13" height="13" rx="1.500" fill="#185ABD"/></svg>
<span class="t" style="left:356.50px;top:1054.91px;font-size:10.5px;color:#fff;font-weight:700;transform:scaleX(1.0079);">W</span>
<svg style="left:404px;top:1048px;" width="24" height="24" viewBox="0 0 24 24"><rect width="24" height="24" fill="#09B83E"/><ellipse cx="9.500" cy="9.500" rx="6.500" ry="5.500" fill="#fff"/><ellipse cx="15.500" cy="14.500" rx="5.500" ry="4.500" fill="#fff" stroke="#09B83E" stroke-width=".800"/><path d="M5.500 13.500l-1 3 3-1.500zM18 18l2 2-.500-2.800z" fill="#fff"/><g fill="#09B83E"><circle cx="7.300" cy="8" r=".900"/><circle cx="11.700" cy="8" r=".900"/><circle cx="13.700" cy="13.500" r=".750"/><circle cx="17.300" cy="13.500" r=".750"/></g></svg>
<svg style="left:453px;top:1048px;" width="30" height="26" viewBox="0 0 30 26"><rect width="24" height="24" fill="#1568B8"/><circle cx="12" cy="11.500" r="7.500" fill="#3FC351" stroke="#fff" stroke-width="1.500"/><path d="M5 20l1.500-4.500 3 3z" fill="#fff"/><path d="M9.500 8c-.800.800-.500 2.500 1 4s3.200 2.300 4.200 1.500l-.800-1.500-1.200.500c-.800-.400-1.700-1.300-2-2l.700-1z" fill="#fff"/><circle cx="19" cy="17.500" r="6.800" fill="#E81123"/></svg>
<span class="t" style="left:468.50px;top:1059.22px;font-size:12.5px;color:#fff;transform:scaleX(1.0067);">2</span>
<svg style="left:501px;top:1048px;" width="26" height="24" viewBox="0 0 26 24"><path d="M1.500 4.500a1 1 0 0 1 1-1h7l2 2.500h11.500a1 1 0 0 1 1 1V20h-22.500z" fill="#F5B93D"/><path d="M1.500 8.500h22.500V20a1 1 0 0 1-1 1H2.500a1 1 0 0 1-1-1z" fill="#FDD867"/><rect x="4" y="14" width="17.500" height="7" fill="#3A96DD"/><rect x="8.500" y="17.500" width="8.500" height="3.500" fill="#FDD867"/></svg>
<svg style="left:550px;top:1047px;" width="26" height="26" viewBox="0 0 26 26"><circle cx="13" cy="13" r="11.500" fill="#DB4437"/><path d="M13 13L3.200 7.200A11.500 11.500 0 0 0 11 24.300z" fill="#0F9D58"/><path d="M13 13l-2 11.300A11.500 11.500 0 0 0 23.800 9H13z" fill="#FFCD40"/><circle cx="13" cy="13" r="5.300" fill="#fff"/><circle cx="13" cy="13" r="4.200" fill="#4285F4"/></svg>
<svg style="left:599px;top:1047px;" width="24" height="26" viewBox="0 0 24 26"><rect x="1.500" y="1.500" width="20" height="22" rx="1" fill="#D8D4C8" stroke="#8A8678" stroke-width="1"/><rect x="4" y="4" width="8" height="6" fill="#F8F8F0"/><circle cx="15.500" cy="9" r="5.200" fill="#6DB33F" stroke="#3E7A22" stroke-width=".800"/><path d="M13 7.500h3.500l-1-1.200M18 10.500h-3.500l1 1.200" stroke="#fff" stroke-width="1" fill="none"/><g fill="#5A7FA8"><rect x="4" y="15" width="3" height="2.500"/><rect x="8" y="15" width="3" height="2.500"/><rect x="12" y="15" width="3" height="2.500"/><rect x="16" y="15" width="3" height="2.500"/><rect x="4" y="19" width="3" height="2.500"/><rect x="8" y="19" width="3" height="2.500"/><rect x="12" y="19" width="3" height="2.500"/><rect x="16" y="19" width="3" height="2.500"/></g></svg>
<svg style="left:647px;top:1047px;" width="28" height="26" viewBox="0 0 28 26"><circle cx="10.500" cy="10.500" r="9" fill="#3F8FD6"/><path d="M5 5c3-1 5 1 4 4-1 2-4 2-3 5 1 2 4 1 5 4-4 1-8-2-9-6 0-3 1-6 3-7zM13 3c3 0 6 3 6 6-2 1-4-1-4-3s-2-1-2-3z" fill="#5CB85C"/><rect x="11.500" y="13" width="12" height="9.500" rx=".800" fill="#E8EEF6" stroke="#5A6E8C" stroke-width=".900"/><rect x="14.500" y="16" width="12" height="9" rx=".800" fill="#F8FAFD" stroke="#5A6E8C" stroke-width=".900"/><path d="M14.500 18.500h12" stroke="#5A6E8C" stroke-width=".800"/></svg>
<svg style="left:697px;top:1047px;" width="28" height="28" viewBox="0 0 28 28"><path d="M6 2.500h6.500l9 3V23l-9 3H6z" fill="#E9B948"/><path d="M6 2.500l9 3V26l-9-3z" fill="#FCD978"/><path d="M14.500 24.500a3.500 3.500 0 0 1 .500-7 5 5 0 0 1 9.300-.500 3.700 3.700 0 0 1-.300 7.500z" fill="#1B83D9"/></svg>
<svg style="left:746px;top:1047px;" width="28" height="26" viewBox="0 0 28 26"><circle cx="15.500" cy="13" r="11.500" fill="#ED6C47"/><path d="M15.500 1.500a11.500 11.500 0 0 1 11.500 11.500H15.500z" fill="#FF8F6B"/><path d="M27 13a11.500 11.500 0 0 1-20 7.800L15.500 13z" fill="#D35230"/><rect x="1" y="6.500" width="13" height="13" rx="1.500" fill="#C43E1C"/></svg>
<span class="t" style="left:749.75px;top:1054.91px;font-size:10.5px;color:#fff;font-weight:700;transform:scaleX(1.0690);">P</span>
<svg style="left:795px;top:1047px;" width="26" height="26" viewBox="0 0 26 26"><path d="M7.500 1.500a6 6 0 0 1 3.200.900 10.500 10.500 0 0 1 12.900 12.900 6 6 0 0 1-8.300 8.300A10.500 10.500 0 0 1 2.400 10.700 6 6 0 0 1 7.500 1.500z" fill="#00AFF0"/><circle cx="13" cy="13" r="8.800" fill="#fff"/></svg>
<span class="t" style="left:803.25px;top:1053.80px;font-size:15px;color:#00AFF0;font-weight:700;transform:scaleX(0.9485);">S</span>
<svg style="left:845px;top:1047px;" width="26" height="26" viewBox="0 0 26 26"><rect x="1.500" y="1.500" width="23" height="23" rx="3" fill="#C4161C"/><rect x="1.500" y="1.500" width="23" height="11" rx="3" fill="#D8262C"/><path d="M8.500 22l2.500-5 9-6.500 2.500 2.500-8 7z" fill="#fff"/><path d="M14 14.500l7-5 1.500 1.500" stroke="#fff" stroke-width="1.500" fill="none"/><path d="M8.500 22l2-1-1.300-1.300z" fill="#333"/></svg>
<span class="t" style="left:850.00px;top:1049.91px;font-size:7.2px;color:#fff;font-weight:700;transform:scaleX(1.0435);">PDF</span>
<svg style="left:892px;top:1046px;" width="28" height="28" viewBox="0 0 28 28"><path d="M12 6.500c6 0 11 3.500 11 8.500 0 3-2.500 4-4.500 3.500-2.500-.600-4 .500-3 2.500.800 1.800-.500 3-3.500 3C6 24 1.500 20.500 1.500 15.500S6 6.500 12 6.500z" fill="#D9C6A5" stroke="#8E7A5A" stroke-width=".800"/><circle cx="6.500" cy="13" r="1.800" fill="#E8352B"/><circle cx="10.500" cy="10" r="1.800" fill="#F5B800"/><circle cx="15.500" cy="10.500" r="1.800" fill="#3FA541"/><circle cx="5.800" cy="18" r="1.800" fill="#2B88D8"/><circle cx="9.500" cy="21" r="1.600" fill="#8E44AD"/><path d="M24.500 1.500l1.500 1-7.500 14-2-1z" fill="#C98A3A" stroke="#7A5220" stroke-width=".500"/><path d="M16.500 15.500l2 1-1.500 4.500-2-1z" fill="#888"/></svg>
<svg style="left:1677px;top:1054px;" width="16" height="12" viewBox="0 0 16 12"><path d="M2 9l6-6 6 6" fill="none" stroke="#fff" stroke-width="1.400"/></svg>
<svg style="left:1707px;top:1050px;" width="20" height="20" viewBox="0 0 20 20"><g fill="none" stroke="#fff" stroke-width="1.200"><path d="M4.500 3.500h13.500v9.500H4.500zM11 13v3.500M7 16.500h8"/><rect x="2" y="2.500" width="4" height="3.500" fill="#0A2C49"/><path d="M3.500 6v10.500h3.500"/></g></svg>
<svg style="left:1739px;top:1051px;" width="22" height="18" viewBox="0 0 22 18"><g fill="none" stroke="#fff" stroke-width="1.200"><path d="M2.500 6.500h3l4-3.500v12l-4-3.500h-3z"/><path d="M12 6.500c1.200 1.500 1.200 3.500 0 5M14.500 4.500c2.200 2.700 2.200 6.300 0 9"/><path d="M17 2.500c3.200 4 3.200 9 0 13" stroke="#7F93A8"/></g></svg>
<span class="t" style="left:1772.00px;top:1054.59px;font-size:12.3px;color:#fff;transform:scaleX(0.8279);">DEU</span>
<span class="t" style="left:1819.50px;top:1045.09px;font-size:12.3px;color:#fff;transform:scaleX(0.9042);">11:36</span>
<span class="t" style="left:1806.50px;top:1063.09px;font-size:12.3px;color:#fff;transform:scaleX(0.8774);">08.05.2020</span>
<svg style="left:1877px;top:1050px;" width="30" height="26" viewBox="0 0 30 26"><path d="M2.500 2.500h15.500v11H7l-2.500 2.500v-2.500h-2z" fill="#fff"/><path d="M5 6h10.500M5 8.500h10.500M5 11h6" stroke="#0A2C49" stroke-width="1"/><circle cx="17.600" cy="17.300" r="8.300" fill="#173F6E" stroke="#6F97C4" stroke-width="1"/></svg>
<span class="t" style="left:1888.00px;top:1061.00px;font-size:13px;color:#fff;font-weight:700;transform:scaleX(0.8985);">19</span>
<div style="left:1914px;top:1040px;width:1px;height:40px;background:#5E7488;"></div>
<svg style="left:1743px;top:933px;" width="160" height="90" viewBox="0 0 160 90"><defs>
<filter id="wb" x="-5%" y="-5%" width="110%" height="110%"><feGaussianBlur stdDeviation=".800"/></filter>
<filter id="wb2" x="-10%" y="-10%" width="120%" height="120%"><feGaussianBlur stdDeviation="1.600"/></filter>
<linearGradient id="wall" x1="0" x2="1"><stop offset="0" stop-color="#C6C6CC"/><stop offset=".07" stop-color="#CFCFD5"/><stop offset=".09" stop-color="#E3E3E9"/><stop offset=".4" stop-color="#DDD9DD"/><stop offset=".7" stop-color="#DEDDE3"/><stop offset="1" stop-color="#E6E8EE"/></linearGradient>
<linearGradient id="skin" x1="0" x2="0" y1="0" y2="1"><stop offset="0" stop-color="#BC9C86"/><stop offset=".5" stop-color="#AE8A74"/><stop offset=".8" stop-color="#8F6C5A"/><stop offset="1" stop-color="#7A5A4A"/></linearGradient>
<pattern id="dots" width="2.200" height="2.200" patternUnits="userSpaceOnUse" patternTransform="rotate(45)"><rect width="2.200" height="2.200" fill="#1B2A35"/><circle cx="1.100" cy="1.100" r=".480" fill="#A9BCC8"/></pattern>
<clipPath id="wc"><rect width="160" height="90"/></clipPath>
</defs>
<g clip-path="url(#wc)">
<rect width="160" height="90" fill="url(#wall)"/>
<g filter="url(#wb)">
<rect x="20.200" y="-3" width="110.700" height="30" fill="#1F1C17"/>
<rect x="20.200" y="24" width="110.700" height="3.200" fill="#15130F"/>
<g fill="none" stroke-linecap="round">
<path d="M33 18c1-5 4-9 9-12 6-3 14-5 24-5.500" stroke-width="2" stroke="#8A6E24"/>
<path d="M44 6c8 1 14 5 22 4.500 10-1 18-7 30-7 8 0 14 2 19 5" stroke-width="3.200" stroke="#5E4C1C"/>
<path d="M60 1c8 2 20 3 34 1" stroke-width="2.400" stroke="#A8852C"/>
<path d="M31 18l2.500-4M53.500 17l.500-7M105 18c-3-3-7-4.500-11-5.500M115 13l1.500-3" stroke-width="1.800" stroke="#C9A034"/>
<path d="M96 4c4 2 6 4 7 7" stroke-width="1.200" stroke="#7A6424"/>
</g>
<rect x="153" y="8.900" width="9" height="12.400" fill="#6E5443"/><rect x="155" y="10.800" width="7" height="8.600" fill="#9C9CC0"/>
<rect x="153" y="31.100" width="9" height="12.500" fill="#6E5443"/><rect x="155" y="33" width="7" height="8.700" fill="#9C9CC0"/>
<rect x="153" y="-2" width="9" height="4.700" fill="#6E5443"/>
<path d="M0 83l36-2v10H0z" fill="#B3B0AC"/><path d="M0 87l30-1v5H0z" fill="#8F8C88"/><path d="M8 83l14-1v3l-14 1z" fill="#D0CECB"/>
</g>
<g filter="url(#wb)">
<path d="M103 57c5-1.500 10-.500 14 5l2 6-14-4z" fill="#20262B"/>
</g>
<path d="M38 92c5-17 15-30 30-35.500l8-2 14 22 14-20 10 2c12 5 18 17 21 33.500z" fill="url(#dots)"/>
<g filter="url(#wb)">
<path d="M38 92c4-14 10-24 20-31l-4 31z" fill="#6A8696" opacity=".28"/>
<path d="M135 92c-3-14-8-24-17-30l6 30z" fill="#6A8696" opacity=".28"/>
<path d="M76 54.500l14 23.300 13-21.800-3-12H78z" fill="#8A6856"/>
<path d="M72.500 40c-.500-12 5-19 15.500-19s15 8 14.500 19c-.500 12-3 22-7 27-3 4.500-12 4.500-15.500 0-4-5-7-15-7.500-27z" fill="url(#skin)"/>
<path d="M71.800 46c-3-16 1-28.500 16-29 15-.500 21.500 11 18 29-.800-7-2-10.500-4.200-13.200-1.500 1.700-2.800 1.700-4.300 1.200-5 1.500-12 1.500-17-.700-1.500.700-2.700.500-3.700-.600-3 3.500-3.800 7-4.800 13.300z" fill="#2E251E"/>
<path d="M75.500 45.800c3-1.400 6.500-1.400 9.500.200M92 46c3-1.600 6.500-1.600 9.500-.200" stroke="#3E2C24" stroke-width="1.500" fill="none"/>
<path d="M77 49.300c2.200.700 4.600.700 6.800 0M93.500 49.300c2.200.700 4.600.700 6.800 0" stroke="#4A342A" stroke-width="1.100" fill="none" opacity=".85"/>
<path d="M87 47l-2.500 9.500c1.500 1 4.500 1 6 0z" fill="#A27863" opacity=".9"/>
<path d="M79 60c3-2.200 6-2.800 9-2.600 3-.200 6 .400 9 2.600l-1.500 7c-2 4-13 4-15 0z" fill="#5F4538" opacity=".7"/>
<path d="M82.500 62c3.500-1.200 7.500-1.200 11 0" stroke="#8A5A50" stroke-width="1.300" fill="none"/>
<path d="M100 62c-2 6-6 11-12 17" stroke="#141414" stroke-width=".500" fill="none"/>
</g>
</g>
</svg>
</div></body></html>
